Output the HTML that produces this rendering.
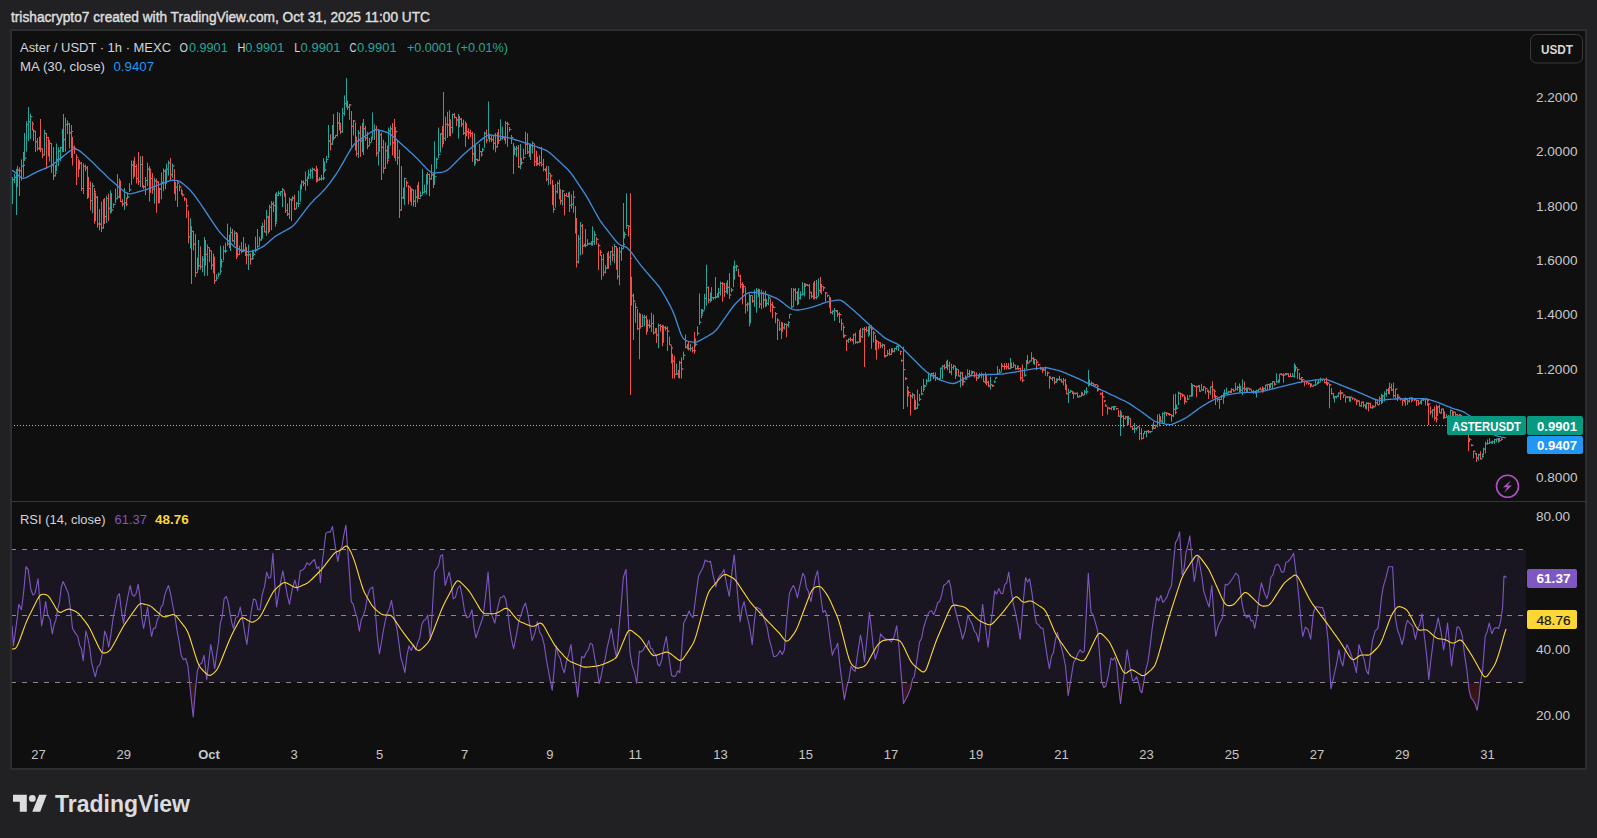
<!DOCTYPE html>
<html><head><meta charset="utf-8">
<style>
html,body{margin:0;padding:0;background:#212023;width:1597px;height:838px;overflow:hidden}
svg{display:block}
text{font-family:"Liberation Sans", sans-serif}
</style></head><body>
<svg width="1597" height="838" viewBox="0 0 1597 838">
<defs>
<clipPath id="cp"><rect x="12" y="31" width="1514" height="470"/></clipPath>
<clipPath id="cr"><rect x="12" y="502" width="1514" height="240"/></clipPath>
<clipPath id="cov"><rect x="12" y="502" width="1514" height="47.5"/></clipPath>
<clipPath id="cun"><rect x="12" y="682.5" width="1514" height="60"/></clipPath>
<linearGradient id="gun" x1="0" y1="0" x2="0" y2="1"><stop offset="0" stop-color="#f23645" stop-opacity="0"/><stop offset="1" stop-color="#f23645" stop-opacity="0.2"/></linearGradient>
<linearGradient id="gov" x1="0" y1="0" x2="0" y2="1"><stop offset="0" stop-color="#089981" stop-opacity="0.18"/><stop offset="1" stop-color="#089981" stop-opacity="0"/></linearGradient>
</defs>
<rect x="0" y="0" width="1597" height="838" fill="#212023"/>
<text x="11" y="22.3" font-size="14" fill="#dcdcdc" stroke="#dcdcdc" stroke-width="0.45" textLength="419" lengthAdjust="spacingAndGlyphs">trishacrypto7 created with TradingView.com, Oct 31, 2025 11:00 UTC</text>
<rect x="11" y="30" width="1575" height="739" fill="#0f0f0f" stroke="#2e2e2e" stroke-width="2"/>
<!-- separator -->
<rect x="12" y="501" width="1573" height="1" fill="#363636"/>

<!-- price pane -->
<g clip-path="url(#cp)">
<path d="M14 425.5H1447" stroke="#9cc4b6" stroke-width="1" stroke-dasharray="1 2" fill="none"/>
<path d="M12.5 177.0V204.0M11.0 190.5h1.5M12.5 179.7h1.5M14.5 173.9V183.1M13.0 179.7h1.5M14.5 177.3h1.5M16.5 168.8V215.0M15.0 177.3h1.5M16.5 174.7h1.5M17.5 165.9V187.2M16.0 174.7h1.5M17.5 170.2h1.5M21.5 159.4V180.6M20.0 170.8h1.5M21.5 166.2h1.5M23.5 152.0V177.0M22.0 166.2h1.5M23.5 165.2h1.5M24.5 133.0V161.0M23.0 165.2h1.5M24.5 158.2h1.5M26.5 121.1V151.5M25.0 158.2h1.5M26.5 124.4h1.5M28.5 107.0V141.0M27.0 124.4h1.5M28.5 121.8h1.5M30.5 113.7V139.1M29.0 121.8h1.5M30.5 116.7h1.5M39.5 136.6V150.1M38.0 148.4h1.5M39.5 144.7h1.5M44.5 129.8V155.3M43.0 155.0h1.5M44.5 133.3h1.5M49.5 140.0V161.4M48.0 145.8h1.5M49.5 143.4h1.5M55.5 165.0V176.5M54.0 175.8h1.5M55.5 173.1h1.5M56.5 143.5V171.3M55.0 173.1h1.5M56.5 159.5h1.5M58.5 147.3V166.1M57.0 159.5h1.5M58.5 151.1h1.5M60.5 146.8V161.0M59.0 151.1h1.5M60.5 147.7h1.5M62.5 128.9V152.1M61.0 147.7h1.5M62.5 137.1h1.5M65.5 117.6V151.8M64.0 139.7h1.5M65.5 124.7h1.5M67.5 120.4V134.2M66.0 124.7h1.5M67.5 123.9h1.5M71.5 125.0V158.0M70.0 132.8h1.5M71.5 131.5h1.5M83.5 163.2V194.1M82.0 188.5h1.5M83.5 166.3h1.5M92.5 182.8V213.3M91.0 200.6h1.5M92.5 186.1h1.5M103.5 199.2V228.7M102.0 228.0h1.5M103.5 202.2h1.5M106.5 195.7V223.0M105.0 216.6h1.5M106.5 198.5h1.5M110.5 190.3V213.8M109.0 208.2h1.5M110.5 198.6h1.5M113.5 203.3V207.9M112.0 210.0h1.5M113.5 204.4h1.5M115.5 188.6V203.2M114.0 204.4h1.5M115.5 198.6h1.5M117.5 174.0V199.3M116.0 198.6h1.5M117.5 196.8h1.5M119.5 178.5V198.2M118.0 196.8h1.5M119.5 183.5h1.5M124.5 188.0V210.0M123.0 204.1h1.5M124.5 202.9h1.5M127.5 192.4V199.2M126.0 204.2h1.5M127.5 197.0h1.5M129.5 183.2V192.0M128.0 197.0h1.5M129.5 189.8h1.5M131.5 160.5V184.8M130.0 189.8h1.5M131.5 165.0h1.5M133.5 160.6V178.7M132.0 165.0h1.5M133.5 164.2h1.5M140.5 156.2V187.0M139.0 181.6h1.5M140.5 164.5h1.5M145.5 177.0V195.1M144.0 186.8h1.5M145.5 180.5h1.5M147.5 162.7V186.1M146.0 180.5h1.5M147.5 169.2h1.5M154.5 177.7V203.7M153.0 189.1h1.5M154.5 181.0h1.5M159.5 187.8V203.1M158.0 202.2h1.5M159.5 189.0h1.5M161.5 172.5V199.3M160.0 189.0h1.5M161.5 182.3h1.5M163.5 168.4V191.2M162.0 182.3h1.5M163.5 171.1h1.5M166.5 163.6V183.8M165.0 177.9h1.5M166.5 169.1h1.5M168.5 160.6V175.6M167.0 169.1h1.5M168.5 163.0h1.5M172.5 163.6V177.9M171.0 174.8h1.5M172.5 165.9h1.5M175.5 181.9V200.7M174.0 189.4h1.5M175.5 187.2h1.5M177.5 180.0V207.0M176.0 187.2h1.5M177.5 183.1h1.5M190.5 218.4V248.5M189.0 237.1h1.5M190.5 231.1h1.5M197.5 257.5V272.8M196.0 272.7h1.5M197.5 269.1h1.5M198.5 240.0V268.5M197.0 269.1h1.5M198.5 265.6h1.5M202.5 256.0V272.3M201.0 266.6h1.5M202.5 259.8h1.5M204.5 237.0V276.0M203.0 259.8h1.5M204.5 241.1h1.5M207.5 244.5V275.8M206.0 254.4h1.5M207.5 247.6h1.5M216.5 274.2V280.8M215.0 280.7h1.5M216.5 278.1h1.5M218.5 272.5V277.3M217.0 278.1h1.5M218.5 274.3h1.5M220.5 245.6V273.8M219.0 274.3h1.5M220.5 271.1h1.5M221.5 259.0V267.6M220.0 271.1h1.5M221.5 261.6h1.5M223.5 245.5V260.4M222.0 261.6h1.5M223.5 251.1h1.5M225.5 242.7V253.3M224.0 251.1h1.5M225.5 250.9h1.5M227.5 223.6V246.1M226.0 250.9h1.5M227.5 243.9h1.5M230.5 227.1V251.1M229.0 246.0h1.5M230.5 232.6h1.5M234.5 230.7V244.9M233.0 240.9h1.5M234.5 233.3h1.5M239.5 245.6V255.1M238.0 254.5h1.5M239.5 250.4h1.5M243.5 237.0V251.6M242.0 251.6h1.5M243.5 250.1h1.5M245.5 243.4V256.2M244.0 250.1h1.5M245.5 248.0h1.5M248.5 244.6V270.0M247.0 254.9h1.5M248.5 254.7h1.5M252.5 249.8V259.9M251.0 259.1h1.5M252.5 258.3h1.5M253.5 251.2V256.5M252.0 258.3h1.5M253.5 254.4h1.5M255.5 236.6V252.4M254.0 254.4h1.5M255.5 250.4h1.5M257.5 229.0V248.3M256.0 250.4h1.5M257.5 246.4h1.5M259.5 236.8V245.7M258.0 246.4h1.5M259.5 239.9h1.5M261.5 226.0V240.7M260.0 239.9h1.5M261.5 226.7h1.5M262.5 222.7V238.8M261.0 226.7h1.5M262.5 226.5h1.5M266.5 210.0V235.8M265.0 231.9h1.5M266.5 217.2h1.5M269.5 204.6V231.9M268.0 231.1h1.5M269.5 207.3h1.5M271.5 201.0V230.2M270.0 207.3h1.5M271.5 204.0h1.5M276.5 192.2V222.0M275.0 223.3h1.5M276.5 195.2h1.5M278.5 190.8V196.0M277.0 195.2h1.5M278.5 193.4h1.5M280.5 191.2V196.0M279.0 193.4h1.5M280.5 191.7h1.5M282.5 188.0V207.0M281.0 191.7h1.5M282.5 189.9h1.5M289.5 197.5V219.1M288.0 214.0h1.5M289.5 199.7h1.5M292.5 196.1V200.6M291.0 200.3h1.5M292.5 198.1h1.5M296.5 202.0V208.8M295.0 209.0h1.5M296.5 203.6h1.5M298.5 190.7V207.0M297.0 203.6h1.5M298.5 203.6h1.5M300.5 184.5V201.7M299.0 203.6h1.5M300.5 186.2h1.5M301.5 180.3V189.5M300.0 186.2h1.5M301.5 182.1h1.5M305.5 171.5V190.7M304.0 183.3h1.5M305.5 180.4h1.5M307.5 176.5V185.9M306.0 180.4h1.5M307.5 177.8h1.5M308.5 169.6V179.0M307.0 177.8h1.5M308.5 174.8h1.5M310.5 168.6V178.7M309.0 174.8h1.5M310.5 170.8h1.5M312.5 167.6V178.8M311.0 170.8h1.5M312.5 169.3h1.5M319.5 177.1V180.7M318.0 179.9h1.5M319.5 179.2h1.5M321.5 174.9V180.6M320.0 179.2h1.5M321.5 178.6h1.5M323.5 158.0V180.1M322.0 178.6h1.5M323.5 177.9h1.5M324.5 161.4V172.5M323.0 177.9h1.5M324.5 169.9h1.5M326.5 155.9V163.0M325.0 169.9h1.5M326.5 159.5h1.5M328.5 125.0V158.0M327.0 159.5h1.5M328.5 141.0h1.5M332.5 124.9V144.9M331.0 144.1h1.5M332.5 132.9h1.5M335.5 135.1V137.8M334.0 137.8h1.5M335.5 135.4h1.5M337.5 111.9V136.6M336.0 135.4h1.5M337.5 122.9h1.5M342.5 108.0V133.0M341.0 131.7h1.5M342.5 113.5h1.5M344.5 95.4V115.7M343.0 113.5h1.5M344.5 103.7h1.5M346.5 78.0V107.4M345.0 103.7h1.5M346.5 103.6h1.5M349.5 104.0V119.9M348.0 107.2h1.5M349.5 105.0h1.5M353.5 120.0V135.5M352.0 126.3h1.5M353.5 120.9h1.5M358.5 130.0V158.0M357.0 153.6h1.5M358.5 133.1h1.5M362.5 122.9V152.2M361.0 141.0h1.5M362.5 126.2h1.5M369.5 137.9V145.7M368.0 146.0h1.5M369.5 142.6h1.5M371.5 136.6V142.1M370.0 142.6h1.5M371.5 139.3h1.5M372.5 112.5V138.7M371.0 139.3h1.5M372.5 130.6h1.5M374.5 124.4V139.9M373.0 130.6h1.5M374.5 129.4h1.5M378.5 129.4V165.6M377.0 153.1h1.5M378.5 144.4h1.5M379.5 130.3V151.8M378.0 144.4h1.5M379.5 134.7h1.5M385.5 142.3V168.7M384.0 168.2h1.5M385.5 150.7h1.5M388.5 127.6V159.3M387.0 160.5h1.5M388.5 131.1h1.5M390.5 125.6V145.7M389.0 131.1h1.5M390.5 128.8h1.5M395.5 127.0V161.1M394.0 144.8h1.5M395.5 131.7h1.5M401.5 166.0V210.6M400.0 210.1h1.5M401.5 197.7h1.5M403.5 187.6V199.0M402.0 197.7h1.5M403.5 195.6h1.5M404.5 177.7V205.1M403.0 195.6h1.5M404.5 178.6h1.5M411.5 188.1V205.5M410.0 197.9h1.5M411.5 189.9h1.5M415.5 189.6V207.0M414.0 201.2h1.5M415.5 197.1h1.5M417.5 184.9V202.6M416.0 197.1h1.5M417.5 187.7h1.5M420.5 191.5V197.6M419.0 198.5h1.5M420.5 195.4h1.5M422.5 168.8V194.8M421.0 195.4h1.5M422.5 192.4h1.5M424.5 184.5V193.1M423.0 192.4h1.5M424.5 191.5h1.5M426.5 174.2V194.5M425.0 191.5h1.5M426.5 181.5h1.5M427.5 172.2V184.7M426.0 181.5h1.5M427.5 174.5h1.5M431.5 164.4V179.7M430.0 178.8h1.5M431.5 174.9h1.5M434.5 141.3V185.0M433.0 184.3h1.5M434.5 176.5h1.5M436.5 157.6V168.9M435.0 176.5h1.5M436.5 159.1h1.5M438.5 127.6V157.8M437.0 159.1h1.5M438.5 154.5h1.5M440.5 133.3V152.5M439.0 154.5h1.5M440.5 133.9h1.5M443.5 92.0V144.0M442.0 142.9h1.5M443.5 138.3h1.5M445.5 116.7V141.0M444.0 138.3h1.5M445.5 124.4h1.5M449.5 110.2V136.0M448.0 124.9h1.5M449.5 120.3h1.5M452.5 113.6V133.4M451.0 127.5h1.5M452.5 114.7h1.5M458.5 114.0V138.6M457.0 120.0h1.5M458.5 116.9h1.5M465.5 121.3V146.8M464.0 133.1h1.5M465.5 123.8h1.5M474.5 133.0V166.0M473.0 153.9h1.5M474.5 149.6h1.5M479.5 144.0V160.8M478.0 160.3h1.5M479.5 151.6h1.5M482.5 148.1V152.3M481.0 154.7h1.5M482.5 149.8h1.5M484.5 131.6V147.8M483.0 149.8h1.5M484.5 133.3h1.5M488.5 101.5V138.9M487.0 140.1h1.5M488.5 135.2h1.5M497.5 132.7V147.5M496.0 146.9h1.5M497.5 133.2h1.5M500.5 119.4V140.4M499.0 140.5h1.5M500.5 138.4h1.5M502.5 126.6V139.7M501.0 138.4h1.5M502.5 137.7h1.5M505.5 121.1V143.9M504.0 139.6h1.5M505.5 123.4h1.5M514.5 146.4V155.0M513.0 149.2h1.5M514.5 149.1h1.5M516.5 145.7V156.9M515.0 149.1h1.5M516.5 148.3h1.5M520.5 144.0V169.2M519.0 166.9h1.5M520.5 158.7h1.5M523.5 148.7V159.8M522.0 162.7h1.5M523.5 157.5h1.5M525.5 131.7V154.5M524.0 157.5h1.5M525.5 144.5h1.5M530.5 143.6V160.0M529.0 154.9h1.5M530.5 145.4h1.5M532.5 141.3V153.5M531.0 145.4h1.5M532.5 143.4h1.5M539.5 155.3V166.0M538.0 163.9h1.5M539.5 162.7h1.5M545.5 168.3V171.5M544.0 169.5h1.5M545.5 169.2h1.5M548.5 166.0V185.0M547.0 179.4h1.5M548.5 173.3h1.5M555.5 183.8V207.6M554.0 209.3h1.5M555.5 191.7h1.5M557.5 181.3V193.6M556.0 191.7h1.5M557.5 183.5h1.5M562.5 189.9V205.5M561.0 200.9h1.5M562.5 191.0h1.5M568.5 192.4V197.7M567.0 196.3h1.5M568.5 194.5h1.5M571.5 194.6V208.7M570.0 205.4h1.5M571.5 204.3h1.5M573.5 190.7V212.7M572.0 204.3h1.5M573.5 197.2h1.5M578.5 235.1V263.6M577.0 261.9h1.5M578.5 238.9h1.5M580.5 222.0V255.2M579.0 238.9h1.5M580.5 225.8h1.5M584.5 244.2V246.4M583.0 246.1h1.5M584.5 244.3h1.5M587.5 239.2V245.6M586.0 245.4h1.5M587.5 243.9h1.5M589.5 242.6V244.6M588.0 243.9h1.5M589.5 243.8h1.5M591.5 241.0V245.6M590.0 243.8h1.5M591.5 243.8h1.5M592.5 226.4V245.6M591.0 243.8h1.5M592.5 241.7h1.5M594.5 230.9V244.9M593.0 241.7h1.5M594.5 235.0h1.5M605.5 265.2V273.4M604.0 272.2h1.5M605.5 268.3h1.5M607.5 252.7V269.1M606.0 268.3h1.5M607.5 254.5h1.5M610.5 250.9V265.1M609.0 257.3h1.5M610.5 251.6h1.5M614.5 244.0V263.3M613.0 255.0h1.5M614.5 246.6h1.5M619.5 247.0V285.2M618.0 276.4h1.5M619.5 251.9h1.5M621.5 246.8V260.8M620.0 251.9h1.5M621.5 248.8h1.5M623.5 203.0V248.7M622.0 248.8h1.5M623.5 244.3h1.5M624.5 231.8V238.4M623.0 244.3h1.5M624.5 234.5h1.5M626.5 193.3V228.9M625.0 234.5h1.5M626.5 225.5h1.5M639.5 312.7V359.3M638.0 328.5h1.5M639.5 317.5h1.5M642.5 314.4V327.0M641.0 326.5h1.5M642.5 317.3h1.5M644.5 315.0V326.3M643.0 317.3h1.5M644.5 317.3h1.5M651.5 312.7V332.1M650.0 325.9h1.5M651.5 323.5h1.5M655.5 328.1V333.4M654.0 332.7h1.5M655.5 331.8h1.5M658.5 323.6V348.3M657.0 334.9h1.5M658.5 325.5h1.5M663.5 325.3V342.7M662.0 339.8h1.5M663.5 327.7h1.5M676.5 363.6V375.0M675.0 374.4h1.5M676.5 373.9h1.5M679.5 360.9V378.5M678.0 376.6h1.5M679.5 362.7h1.5M683.5 351.6V360.0M682.0 369.0h1.5M683.5 355.3h1.5M685.5 334.6V348.4M684.0 355.3h1.5M685.5 347.0h1.5M690.5 343.7V351.4M689.0 348.8h1.5M690.5 348.6h1.5M695.5 338.4V346.6M694.0 350.8h1.5M695.5 344.3h1.5M697.5 326.3V335.8M696.0 344.3h1.5M697.5 333.3h1.5M699.5 293.5V325.0M698.0 333.3h1.5M699.5 322.3h1.5M701.5 309.1V318.3M700.0 322.3h1.5M701.5 315.3h1.5M702.5 309.1V314.0M701.0 315.3h1.5M702.5 310.8h1.5M704.5 293.8V309.8M703.0 310.8h1.5M704.5 298.5h1.5M706.5 264.7V305.5M705.0 298.5h1.5M706.5 287.7h1.5M710.5 292.6V302.4M709.0 299.9h1.5M710.5 299.1h1.5M711.5 287.1V301.2M710.0 299.1h1.5M711.5 297.6h1.5M713.5 297.3V299.8M712.0 297.6h1.5M713.5 297.5h1.5M715.5 277.0V299.1M714.0 297.5h1.5M715.5 296.9h1.5M717.5 293.1V297.8M716.0 296.9h1.5M717.5 296.4h1.5M718.5 287.8V297.8M717.0 296.4h1.5M718.5 292.4h1.5M720.5 281.5V295.6M719.0 292.4h1.5M720.5 283.4h1.5M726.5 282.6V293.1M725.0 291.6h1.5M726.5 286.4h1.5M731.5 287.8V292.3M730.0 294.9h1.5M731.5 290.0h1.5M733.5 265.9V287.2M732.0 290.0h1.5M733.5 272.6h1.5M734.5 260.5V279.7M733.0 272.6h1.5M734.5 267.2h1.5M736.5 265.0V271.1M735.0 267.2h1.5M736.5 266.3h1.5M743.5 284.3V293.1M742.0 287.6h1.5M743.5 286.6h1.5M747.5 302.1V311.5M746.0 305.0h1.5M747.5 304.0h1.5M750.5 295.2V323.3M749.0 315.2h1.5M750.5 295.5h1.5M754.5 289.6V306.8M753.0 301.0h1.5M754.5 292.3h1.5M756.5 288.0V312.7M755.0 292.3h1.5M756.5 290.9h1.5M758.5 288.5V296.8M757.0 290.9h1.5M758.5 290.8h1.5M761.5 289.7V309.2M760.0 304.1h1.5M761.5 293.3h1.5M766.5 299.1V305.9M765.0 305.7h1.5M766.5 303.4h1.5M768.5 296.1V305.3M767.0 303.4h1.5M768.5 297.8h1.5M781.5 321.8V339.1M780.0 329.2h1.5M781.5 323.5h1.5M784.5 323.0V329.5M783.0 327.8h1.5M784.5 324.5h1.5M788.5 321.2V327.5M787.0 324.9h1.5M788.5 322.5h1.5M789.5 314.1V318.7M788.0 322.5h1.5M789.5 314.4h1.5M791.5 288.0V308.7M790.0 314.4h1.5M791.5 306.8h1.5M793.5 288.0V306.6M792.0 306.8h1.5M793.5 289.9h1.5M798.5 288.0V304.4M797.0 300.0h1.5M798.5 298.2h1.5M800.5 291.2V299.5M799.0 298.2h1.5M800.5 295.0h1.5M802.5 282.2V295.3M801.0 295.0h1.5M802.5 294.0h1.5M804.5 282.9V296.5M803.0 294.0h1.5M804.5 284.3h1.5M813.5 282.5V299.4M812.0 296.3h1.5M813.5 286.1h1.5M816.5 280.0V299.4M815.0 297.5h1.5M816.5 296.8h1.5M818.5 278.4V296.1M817.0 296.8h1.5M818.5 290.6h1.5M821.5 284.0V294.3M820.0 291.8h1.5M821.5 286.5h1.5M832.5 310.4V314.5M831.0 312.4h1.5M832.5 311.2h1.5M834.5 308.0V320.9M833.0 311.2h1.5M834.5 310.6h1.5M836.5 310.2V312.2M835.0 310.6h1.5M836.5 310.6h1.5M848.5 338.2V342.9M847.0 340.8h1.5M848.5 339.3h1.5M853.5 333.7V344.5M852.0 340.4h1.5M853.5 334.8h1.5M857.5 341.7V343.7M856.0 342.3h1.5M857.5 342.0h1.5M859.5 330.2V342.7M858.0 342.0h1.5M859.5 330.6h1.5M862.5 327.7V338.1M861.0 336.6h1.5M862.5 329.3h1.5M868.5 326.1V336.7M867.0 330.4h1.5M868.5 328.2h1.5M869.5 325.5V335.4M868.0 328.2h1.5M869.5 327.8h1.5M882.5 343.5V348.3M881.0 345.7h1.5M882.5 344.9h1.5M885.5 355.4V357.4M884.0 356.1h1.5M885.5 355.7h1.5M887.5 350.1V356.2M886.0 355.7h1.5M887.5 353.7h1.5M891.5 348.3V354.8M890.0 354.4h1.5M891.5 349.0h1.5M894.5 347.7V352.4M893.0 351.3h1.5M894.5 348.5h1.5M896.5 345.7V350.2M895.0 348.5h1.5M896.5 346.3h1.5M898.5 344.5V351.0M897.0 346.3h1.5M898.5 345.4h1.5M912.5 392.7V398.5M911.0 396.1h1.5M912.5 394.8h1.5M915.5 399.8V410.0M914.0 408.6h1.5M915.5 408.1h1.5M917.5 389.6V409.0M916.0 408.1h1.5M917.5 404.8h1.5M919.5 394.0V401.0M918.0 404.8h1.5M919.5 399.3h1.5M921.5 386.1V395.3M920.0 399.3h1.5M921.5 393.9h1.5M923.5 378.9V391.8M922.0 393.9h1.5M923.5 389.4h1.5M924.5 384.8V387.7M923.0 389.4h1.5M924.5 385.9h1.5M926.5 378.8V384.8M925.0 385.9h1.5M926.5 381.0h1.5M928.5 372.4V381.5M927.0 381.0h1.5M928.5 380.9h1.5M930.5 373.9V381.0M929.0 380.9h1.5M930.5 374.3h1.5M931.5 372.8V376.6M930.0 374.3h1.5M931.5 373.7h1.5M939.5 378.5V380.5M938.0 379.4h1.5M939.5 378.7h1.5M940.5 367.8V379.2M939.0 378.7h1.5M940.5 368.2h1.5M942.5 365.1V378.9M941.0 368.2h1.5M942.5 366.3h1.5M946.5 360.8V368.3M945.0 367.6h1.5M946.5 362.0h1.5M951.5 363.7V375.2M950.0 372.0h1.5M951.5 367.6h1.5M953.5 364.8V369.7M952.0 367.6h1.5M953.5 366.0h1.5M956.5 368.1V376.2M955.0 372.4h1.5M956.5 369.5h1.5M960.5 371.6V387.5M959.0 376.0h1.5M960.5 373.1h1.5M963.5 377.4V382.8M962.0 384.0h1.5M963.5 381.7h1.5M965.5 375.3V379.9M964.0 381.7h1.5M965.5 378.9h1.5M967.5 369.2V376.9M966.0 378.9h1.5M967.5 373.8h1.5M971.5 370.5V376.2M970.0 375.3h1.5M971.5 373.4h1.5M972.5 371.1V374.1M971.0 373.4h1.5M972.5 371.9h1.5M978.5 375.2V378.8M977.0 377.9h1.5M978.5 375.6h1.5M979.5 373.0V377.7M978.0 375.6h1.5M979.5 374.8h1.5M981.5 372.4V378.4M980.0 374.8h1.5M981.5 374.4h1.5M985.5 372.4V383.7M984.0 381.8h1.5M985.5 376.6h1.5M990.5 376.7V389.6M989.0 386.0h1.5M990.5 384.7h1.5M994.5 380.5V382.9M993.0 385.8h1.5M994.5 381.8h1.5M995.5 377.6V379.6M994.0 381.8h1.5M995.5 377.7h1.5M997.5 366.0V374.6M996.0 377.7h1.5M997.5 373.7h1.5M999.5 369.0V373.1M998.0 373.7h1.5M999.5 372.3h1.5M1001.5 362.9V371.7M1000.0 372.3h1.5M1001.5 365.9h1.5M1010.5 357.9V369.4M1009.0 368.4h1.5M1010.5 365.0h1.5M1013.5 362.2V367.5M1012.0 367.5h1.5M1013.5 365.2h1.5M1017.5 365.4V369.5M1016.0 368.8h1.5M1017.5 366.3h1.5M1024.5 368.2V376.7M1023.0 380.3h1.5M1024.5 375.2h1.5M1026.5 360.0V369.3M1025.0 375.2h1.5M1026.5 362.4h1.5M1029.5 360.7V362.7M1028.0 362.9h1.5M1029.5 361.1h1.5M1031.5 352.2V361.2M1030.0 361.1h1.5M1031.5 358.5h1.5M1034.5 358.6V364.9M1033.0 361.3h1.5M1034.5 359.6h1.5M1045.5 366.5V375.8M1044.0 369.9h1.5M1045.5 367.5h1.5M1052.5 376.8V381.0M1051.0 378.6h1.5M1052.5 377.7h1.5M1056.5 378.4V383.0M1055.0 382.2h1.5M1056.5 379.2h1.5M1057.5 379.2V381.2M1056.0 379.2h1.5M1057.5 379.2h1.5M1063.5 378.0V385.4M1062.0 381.9h1.5M1063.5 380.5h1.5M1068.5 388.7V403.0M1067.0 393.7h1.5M1068.5 392.4h1.5M1070.5 390.0V392.8M1069.0 392.4h1.5M1070.5 391.2h1.5M1075.5 392.7V394.7M1074.0 393.3h1.5M1075.5 393.3h1.5M1079.5 395.2V397.2M1078.0 397.0h1.5M1079.5 396.3h1.5M1081.5 391.6V396.3M1080.0 396.3h1.5M1081.5 394.6h1.5M1084.5 390.0V394.9M1083.0 395.0h1.5M1084.5 392.0h1.5M1086.5 387.3V394.4M1085.0 392.0h1.5M1086.5 391.9h1.5M1088.5 370.0V386.6M1087.0 391.9h1.5M1088.5 385.4h1.5M1089.5 379.4V385.0M1088.0 385.4h1.5M1089.5 383.9h1.5M1091.5 381.5V385.8M1090.0 383.9h1.5M1091.5 383.3h1.5M1095.5 384.2V386.2M1094.0 384.9h1.5M1095.5 384.7h1.5M1111.5 406.7V410.3M1110.0 408.5h1.5M1111.5 407.1h1.5M1113.5 406.2V410.3M1112.0 407.1h1.5M1113.5 406.7h1.5M1114.5 405.9V410.2M1113.0 406.7h1.5M1114.5 406.6h1.5M1120.5 410.2V436.0M1119.0 416.1h1.5M1120.5 412.3h1.5M1125.5 415.9V419.5M1124.0 418.5h1.5M1125.5 417.0h1.5M1128.5 415.9V424.8M1127.0 424.1h1.5M1128.5 418.4h1.5M1134.5 423.0V433.0M1133.0 429.0h1.5M1134.5 428.6h1.5M1136.5 427.9V430.3M1135.0 428.6h1.5M1136.5 427.9h1.5M1137.5 426.4V428.5M1136.0 427.9h1.5M1137.5 426.7h1.5M1143.5 433.2V438.8M1142.0 438.5h1.5M1143.5 433.5h1.5M1144.5 430.8V433.8M1143.0 433.5h1.5M1144.5 431.5h1.5M1146.5 430.7V437.4M1145.0 431.5h1.5M1146.5 431.3h1.5M1150.5 431.0V433.0M1149.0 431.8h1.5M1150.5 431.5h1.5M1152.5 424.5V430.2M1151.0 431.5h1.5M1152.5 426.3h1.5M1155.5 424.7V428.3M1154.0 428.4h1.5M1155.5 425.7h1.5M1157.5 414.5V427.4M1156.0 425.7h1.5M1157.5 422.6h1.5M1159.5 413.8V426.4M1158.0 422.6h1.5M1159.5 417.2h1.5M1162.5 412.4V424.0M1161.0 421.2h1.5M1162.5 413.6h1.5M1164.5 411.6V423.0M1163.0 413.6h1.5M1164.5 412.8h1.5M1173.5 394.4V417.3M1172.0 415.7h1.5M1173.5 409.3h1.5M1176.5 404.5V409.8M1175.0 412.3h1.5M1176.5 408.1h1.5M1178.5 391.6V405.2M1177.0 408.1h1.5M1178.5 393.1h1.5M1187.5 394.8V400.2M1186.0 401.9h1.5M1187.5 399.1h1.5M1189.5 395.5V397.5M1188.0 399.1h1.5M1189.5 395.8h1.5M1191.5 383.0V396.8M1190.0 395.8h1.5M1191.5 394.8h1.5M1192.5 384.2V396.5M1191.0 394.8h1.5M1192.5 385.5h1.5M1198.5 385.0V387.3M1197.0 386.7h1.5M1198.5 385.9h1.5M1201.5 383.8V390.5M1200.0 391.1h1.5M1201.5 389.9h1.5M1203.5 386.1V391.1M1202.0 389.9h1.5M1203.5 386.9h1.5M1210.5 386.5V394.9M1209.0 391.9h1.5M1210.5 386.8h1.5M1221.5 395.1V399.9M1220.0 399.5h1.5M1221.5 396.1h1.5M1223.5 392.6V403.9M1222.0 396.1h1.5M1223.5 395.0h1.5M1224.5 389.5V397.8M1223.0 395.0h1.5M1224.5 393.4h1.5M1226.5 387.6V394.5M1225.0 393.4h1.5M1226.5 393.2h1.5M1228.5 390.9V393.4M1227.0 393.2h1.5M1228.5 391.9h1.5M1231.5 388.1V392.6M1230.0 392.5h1.5M1231.5 389.5h1.5M1235.5 382.6V390.4M1234.0 390.8h1.5M1235.5 389.2h1.5M1237.5 385.9V390.7M1236.0 389.2h1.5M1237.5 387.4h1.5M1240.5 385.7V392.4M1239.0 390.9h1.5M1240.5 390.3h1.5M1242.5 379.4V395.1M1241.0 390.3h1.5M1242.5 388.4h1.5M1246.5 387.5V392.2M1245.0 389.2h1.5M1246.5 389.2h1.5M1247.5 387.6V392.6M1246.0 389.2h1.5M1247.5 388.3h1.5M1256.5 389.7V397.6M1255.0 393.1h1.5M1256.5 390.7h1.5M1258.5 389.1V392.0M1257.0 390.7h1.5M1258.5 389.1h1.5M1263.5 387.5V391.6M1262.0 391.7h1.5M1263.5 388.7h1.5M1265.5 384.6V390.4M1264.0 388.7h1.5M1265.5 385.2h1.5M1267.5 383.8V390.0M1266.0 385.2h1.5M1267.5 384.5h1.5M1270.5 383.0V388.0M1269.0 387.1h1.5M1270.5 383.9h1.5M1272.5 381.3V388.8M1271.0 383.9h1.5M1272.5 381.7h1.5M1276.5 373.2V382.8M1275.0 384.2h1.5M1276.5 381.8h1.5M1278.5 379.6V382.6M1277.0 381.8h1.5M1278.5 381.7h1.5M1279.5 374.0V382.6M1278.0 381.7h1.5M1279.5 374.1h1.5M1285.5 373.2V375.2M1284.0 375.0h1.5M1285.5 373.9h1.5M1286.5 373.2V375.2M1285.0 373.9h1.5M1286.5 373.8h1.5M1292.5 373.2V376.6M1291.0 376.5h1.5M1292.5 376.3h1.5M1294.5 363.2V377.6M1293.0 376.3h1.5M1294.5 365.5h1.5M1301.5 377.0V382.6M1300.0 378.9h1.5M1301.5 377.5h1.5M1313.5 384.5V386.5M1312.0 386.3h1.5M1313.5 385.3h1.5M1315.5 379.4V386.1M1314.0 385.3h1.5M1315.5 384.4h1.5M1317.5 381.6V383.9M1316.0 384.4h1.5M1317.5 383.4h1.5M1318.5 379.7V382.8M1317.0 383.4h1.5M1318.5 382.4h1.5M1320.5 377.6V381.8M1319.0 382.4h1.5M1320.5 379.6h1.5M1322.5 379.1V381.1M1321.0 379.6h1.5M1322.5 379.4h1.5M1327.5 381.9V386.0M1326.0 383.1h1.5M1327.5 383.1h1.5M1334.5 396.0V402.6M1333.0 397.7h1.5M1334.5 396.8h1.5M1336.5 396.2V398.5M1335.0 396.8h1.5M1336.5 396.2h1.5M1338.5 392.4V397.0M1337.0 396.2h1.5M1338.5 393.2h1.5M1341.5 392.2V394.2M1340.0 393.8h1.5M1341.5 393.0h1.5M1347.5 396.4V398.4M1346.0 397.0h1.5M1347.5 397.0h1.5M1350.5 396.4V401.7M1349.0 399.5h1.5M1350.5 397.2h1.5M1361.5 401.7V407.1M1360.0 405.8h1.5M1361.5 402.2h1.5M1366.5 402.2V409.6M1365.0 407.8h1.5M1366.5 403.3h1.5M1372.5 405.2V408.9M1371.0 407.7h1.5M1372.5 406.4h1.5M1375.5 400.0V406.4M1374.0 406.8h1.5M1375.5 402.8h1.5M1379.5 396.2V404.8M1378.0 404.8h1.5M1379.5 398.5h1.5M1382.5 394.6V403.1M1381.0 401.6h1.5M1382.5 396.2h1.5M1384.5 391.3V401.4M1383.0 396.2h1.5M1384.5 393.9h1.5M1386.5 388.9V396.5M1385.0 393.9h1.5M1386.5 390.2h1.5M1389.5 382.6V394.5M1388.0 391.7h1.5M1389.5 387.3h1.5M1395.5 388.9V398.6M1394.0 395.7h1.5M1395.5 389.1h1.5M1405.5 397.4V405.8M1404.0 401.1h1.5M1405.5 399.5h1.5M1409.5 397.4V402.7M1408.0 401.1h1.5M1409.5 398.1h1.5M1411.5 397.4V402.2M1410.0 398.1h1.5M1411.5 398.0h1.5M1420.5 400.5V403.3M1419.0 403.3h1.5M1420.5 401.6h1.5M1421.5 399.2V404.6M1420.0 401.6h1.5M1421.5 399.8h1.5M1423.5 399.0V401.0M1422.0 399.8h1.5M1423.5 399.6h1.5M1425.5 398.7V405.5M1424.0 399.6h1.5M1425.5 399.4h1.5M1432.5 409.2V417.7M1431.0 411.7h1.5M1432.5 410.1h1.5M1437.5 406.2V416.1M1436.0 419.2h1.5M1437.5 406.9h1.5M1441.5 408.8V413.5M1440.0 412.9h1.5M1441.5 409.0h1.5M1446.5 414.1V417.8M1445.0 417.6h1.5M1446.5 416.9h1.5M1448.5 415.1V417.1M1447.0 416.9h1.5M1448.5 416.2h1.5M1450.5 409.4V416.5M1449.0 416.2h1.5M1450.5 410.4h1.5M1453.5 411.4V416.4M1452.0 413.5h1.5M1453.5 412.1h1.5M1459.5 414.0V417.7M1458.0 416.0h1.5M1459.5 414.6h1.5M1478.5 453.7V460.5M1477.0 458.1h1.5M1478.5 454.8h1.5M1482.5 453.6V457.6M1481.0 458.8h1.5M1482.5 456.7h1.5M1483.5 447.8V455.4M1482.0 456.7h1.5M1483.5 449.2h1.5M1485.5 441.6V453.5M1484.0 449.2h1.5M1485.5 443.7h1.5M1487.5 439.5V444.6M1486.0 443.7h1.5M1487.5 443.5h1.5M1489.5 438.0V443.8M1488.0 443.5h1.5M1489.5 442.4h1.5M1491.5 441.7V443.7M1490.0 442.4h1.5M1491.5 442.2h1.5M1492.5 440.7V443.8M1491.0 442.2h1.5M1492.5 441.6h1.5M1494.5 439.0V444.0M1493.0 441.6h1.5M1494.5 439.5h1.5M1496.5 438.6V442.3M1495.0 439.5h1.5M1496.5 439.0h1.5M1498.5 438.0V442.8M1497.0 439.0h1.5M1498.5 438.6h1.5M1501.5 438.1V440.5M1500.0 440.4h1.5M1501.5 439.3h1.5" stroke="#26a69a" stroke-width="1" fill="none"/>
<path d="M19.5 167.3V196.0M18.0 170.2h1.5M19.5 170.8h1.5M32.5 121.4V130.4M31.0 116.7h1.5M32.5 124.0h1.5M33.5 129.1V141.1M32.0 124.0h1.5M33.5 131.2h1.5M35.5 130.8V152.0M34.0 131.2h1.5M35.5 141.8h1.5M37.5 138.1V150.8M36.0 141.8h1.5M37.5 148.4h1.5M40.5 119.0V152.1M39.0 144.7h1.5M40.5 148.9h1.5M42.5 148.4V158.3M41.0 148.9h1.5M42.5 155.0h1.5M46.5 133.0V169.0M45.0 133.3h1.5M46.5 137.5h1.5M48.5 136.9V156.5M47.0 137.5h1.5M48.5 145.8h1.5M51.5 143.0V172.8M50.0 143.4h1.5M51.5 164.9h1.5M53.5 147.0V180.0M52.0 164.9h1.5M53.5 175.8h1.5M63.5 114.0V152.0M62.0 137.1h1.5M63.5 139.7h1.5M69.5 123.2V148.5M68.0 123.9h1.5M69.5 132.8h1.5M72.5 136.9V165.5M71.0 131.5h1.5M72.5 147.2h1.5M74.5 145.5V154.0M73.0 147.2h1.5M74.5 148.4h1.5M76.5 154.1V185.0M75.0 148.4h1.5M76.5 157.4h1.5M78.5 158.8V177.0M77.0 157.4h1.5M78.5 161.6h1.5M79.5 160.3V169.4M78.0 161.6h1.5M79.5 163.2h1.5M81.5 161.8V191.2M80.0 163.2h1.5M81.5 188.5h1.5M85.5 164.7V171.2M84.0 166.3h1.5M85.5 167.9h1.5M87.5 166.0V199.0M86.0 167.9h1.5M87.5 185.5h1.5M88.5 176.8V197.9M87.0 185.5h1.5M88.5 188.4h1.5M90.5 181.5V210.4M89.0 188.4h1.5M90.5 200.6h1.5M94.5 188.1V223.6M93.0 186.1h1.5M94.5 191.4h1.5M95.5 192.5V221.1M94.0 191.4h1.5M95.5 197.3h1.5M97.5 196.1V227.7M96.0 197.3h1.5M97.5 224.0h1.5M99.5 209.1V230.4M98.0 224.0h1.5M99.5 224.1h1.5M101.5 201.7V232.0M100.0 224.1h1.5M101.5 228.0h1.5M104.5 198.0V224.0M103.0 202.2h1.5M104.5 216.6h1.5M108.5 193.5V221.0M107.0 198.5h1.5M108.5 208.2h1.5M111.5 193.1V212.7M110.0 198.6h1.5M111.5 210.0h1.5M120.5 180.4V201.9M119.0 183.5h1.5M120.5 201.7h1.5M122.5 199.2V206.4M121.0 201.7h1.5M122.5 204.1h1.5M126.5 197.5V206.4M125.0 202.9h1.5M126.5 204.2h1.5M134.5 156.9V176.8M133.0 164.2h1.5M134.5 166.6h1.5M136.5 164.4V183.4M135.0 166.6h1.5M136.5 178.7h1.5M138.5 152.0V185.0M137.0 178.7h1.5M138.5 181.6h1.5M142.5 155.9V187.5M141.0 164.5h1.5M142.5 186.3h1.5M143.5 185.1V188.9M142.0 186.3h1.5M143.5 186.8h1.5M149.5 166.0V201.7M148.0 169.2h1.5M149.5 174.4h1.5M150.5 168.6V192.9M149.0 174.4h1.5M150.5 178.6h1.5M152.5 173.1V193.9M151.0 178.6h1.5M152.5 189.1h1.5M156.5 178.7V212.7M155.0 181.0h1.5M156.5 181.9h1.5M158.5 181.2V203.5M157.0 181.9h1.5M158.5 202.2h1.5M165.5 169.2V189.2M164.0 171.1h1.5M165.5 177.9h1.5M170.5 158.0V180.1M169.0 163.0h1.5M170.5 174.8h1.5M174.5 169.2V193.8M173.0 165.9h1.5M174.5 189.4h1.5M179.5 184.5V191.3M178.0 183.1h1.5M179.5 187.0h1.5M181.5 188.6V194.7M180.0 187.0h1.5M181.5 191.0h1.5M182.5 192.7V196.5M181.0 191.0h1.5M182.5 194.9h1.5M184.5 196.9V200.9M183.0 194.9h1.5M184.5 198.8h1.5M186.5 199.0V218.0M185.0 198.8h1.5M186.5 205.8h1.5M188.5 210.6V243.5M187.0 205.8h1.5M188.5 237.1h1.5M191.5 226.2V284.0M190.0 231.1h1.5M191.5 231.4h1.5M193.5 230.8V250.4M192.0 231.4h1.5M193.5 244.3h1.5M195.5 234.1V277.0M194.0 244.3h1.5M195.5 272.7h1.5M200.5 246.3V269.6M199.0 265.6h1.5M200.5 266.6h1.5M205.5 240.0V265.7M204.0 241.1h1.5M205.5 254.4h1.5M209.5 247.7V262.2M208.0 247.6h1.5M209.5 250.7h1.5M211.5 250.6V269.6M210.0 250.7h1.5M211.5 265.2h1.5M213.5 253.5V273.4M212.0 265.2h1.5M213.5 267.1h1.5M214.5 256.6V284.0M213.0 267.1h1.5M214.5 280.7h1.5M229.5 234.5V248.3M228.0 243.9h1.5M229.5 246.0h1.5M232.5 228.9V241.7M231.0 232.6h1.5M232.5 240.9h1.5M236.5 232.0V259.0M235.0 233.3h1.5M236.5 234.9h1.5M237.5 233.4V256.8M236.0 234.9h1.5M237.5 254.5h1.5M241.5 242.1V253.4M240.0 250.4h1.5M241.5 251.6h1.5M246.5 247.3V264.4M245.0 248.0h1.5M246.5 254.9h1.5M250.5 253.3V264.6M249.0 254.7h1.5M250.5 259.1h1.5M264.5 219.6V232.4M263.0 226.5h1.5M264.5 231.9h1.5M268.5 215.7V233.7M267.0 217.2h1.5M268.5 231.1h1.5M273.5 201.5V212.2M272.0 204.0h1.5M273.5 205.5h1.5M275.5 193.5V226.5M274.0 205.5h1.5M275.5 223.3h1.5M284.5 190.4V196.6M283.0 189.9h1.5M284.5 193.6h1.5M285.5 192.8V213.1M284.0 193.6h1.5M285.5 210.5h1.5M287.5 203.5V216.1M286.0 210.5h1.5M287.5 214.0h1.5M291.5 198.4V221.0M290.0 199.7h1.5M291.5 200.3h1.5M294.5 194.6V210.1M293.0 198.1h1.5M294.5 209.0h1.5M303.5 180.4V186.2M302.0 182.1h1.5M303.5 183.3h1.5M314.5 168.5V170.6M313.0 169.3h1.5M314.5 170.6h1.5M316.5 165.8V182.5M315.0 170.6h1.5M316.5 174.0h1.5M317.5 168.6V181.7M316.0 174.0h1.5M317.5 179.9h1.5M330.5 134.2V150.5M329.0 141.0h1.5M330.5 144.1h1.5M333.5 114.0V140.4M332.0 132.9h1.5M333.5 137.8h1.5M339.5 112.8V130.4M338.0 122.9h1.5M339.5 126.7h1.5M340.5 122.9V134.2M339.0 126.7h1.5M340.5 131.7h1.5M347.5 100.8V109.9M346.0 103.6h1.5M347.5 107.2h1.5M351.5 111.0V147.0M350.0 105.0h1.5M351.5 126.3h1.5M355.5 122.5V150.6M354.0 120.9h1.5M355.5 147.5h1.5M356.5 136.6V156.5M355.0 147.5h1.5M356.5 153.6h1.5M360.5 125.8V156.9M359.0 133.1h1.5M360.5 141.0h1.5M363.5 119.0V155.0M362.0 126.2h1.5M363.5 128.7h1.5M365.5 125.7V141.0M364.0 128.7h1.5M365.5 138.0h1.5M367.5 131.8V149.2M366.0 138.0h1.5M367.5 146.0h1.5M376.5 125.8V156.6M375.0 129.4h1.5M376.5 153.1h1.5M381.5 132.5V180.0M380.0 134.7h1.5M381.5 147.3h1.5M383.5 139.8V173.4M382.0 147.3h1.5M383.5 168.2h1.5M387.5 145.5V164.0M386.0 150.7h1.5M387.5 160.5h1.5M392.5 123.0V155.4M391.0 128.8h1.5M392.5 142.8h1.5M394.5 119.0V158.0M393.0 142.8h1.5M394.5 144.8h1.5M397.5 139.9V164.8M396.0 131.7h1.5M397.5 157.6h1.5M399.5 149.6V218.0M398.0 157.6h1.5M399.5 210.1h1.5M406.5 180.4V187.1M405.0 178.6h1.5M406.5 182.9h1.5M408.5 185.0V204.4M407.0 182.9h1.5M408.5 187.0h1.5M410.5 186.6V201.7M409.0 187.0h1.5M410.5 197.9h1.5M413.5 189.6V206.5M412.0 189.9h1.5M413.5 201.2h1.5M418.5 181.8V198.8M417.0 187.7h1.5M418.5 198.5h1.5M429.5 173.6V196.2M428.0 174.5h1.5M429.5 178.8h1.5M433.5 173.5V188.1M432.0 174.9h1.5M433.5 184.3h1.5M442.5 125.8V147.5M441.0 133.9h1.5M442.5 142.9h1.5M447.5 111.8V138.0M446.0 124.4h1.5M447.5 124.9h1.5M450.5 119.4V136.5M449.0 120.3h1.5M450.5 127.5h1.5M454.5 112.9V118.3M453.0 114.7h1.5M454.5 117.4h1.5M456.5 117.0V126.2M455.0 117.4h1.5M456.5 120.0h1.5M459.5 116.1V127.4M458.0 116.9h1.5M459.5 119.2h1.5M461.5 117.9V127.0M460.0 119.2h1.5M461.5 124.2h1.5M463.5 119.6V135.0M462.0 124.2h1.5M463.5 133.1h1.5M466.5 123.5V136.3M465.0 123.8h1.5M466.5 131.8h1.5M468.5 128.3V139.1M467.0 131.8h1.5M468.5 132.9h1.5M470.5 129.6V137.1M469.0 132.9h1.5M470.5 133.7h1.5M472.5 131.8V161.8M471.0 133.7h1.5M472.5 153.9h1.5M475.5 143.8V164.3M474.0 149.6h1.5M475.5 159.4h1.5M477.5 158.8V161.5M476.0 159.4h1.5M477.5 160.3h1.5M481.5 151.1V156.7M480.0 151.6h1.5M481.5 154.7h1.5M486.5 129.6V143.3M485.0 133.3h1.5M486.5 140.1h1.5M489.5 133.7V142.2M488.0 135.2h1.5M489.5 138.9h1.5M491.5 135.7V142.1M490.0 138.9h1.5M491.5 139.7h1.5M493.5 135.1V149.8M492.0 139.7h1.5M493.5 143.3h1.5M495.5 133.0V152.3M494.0 143.3h1.5M495.5 146.9h1.5M498.5 129.0V143.9M497.0 133.2h1.5M498.5 140.5h1.5M504.5 136.7V140.2M503.0 137.7h1.5M504.5 139.6h1.5M507.5 121.7V146.8M506.0 123.4h1.5M507.5 124.2h1.5M509.5 127.0V131.6M508.0 124.2h1.5M509.5 129.5h1.5M511.5 135.0V144.1M510.0 129.5h1.5M511.5 137.6h1.5M513.5 143.0V174.0M512.0 137.6h1.5M513.5 149.2h1.5M518.5 145.0V167.7M517.0 148.3h1.5M518.5 166.9h1.5M521.5 157.8V165.1M520.0 158.7h1.5M521.5 162.7h1.5M527.5 133.3V154.1M526.0 144.5h1.5M527.5 152.0h1.5M529.5 144.2V157.0M528.0 152.0h1.5M529.5 154.9h1.5M534.5 143.9V166.0M533.0 143.4h1.5M534.5 161.6h1.5M536.5 150.8V166.0M535.0 161.6h1.5M536.5 163.9h1.5M537.5 156.7V165.3M536.0 163.9h1.5M537.5 163.9h1.5M541.5 146.8V166.4M540.0 162.7h1.5M541.5 164.5h1.5M543.5 158.8V171.4M542.0 164.5h1.5M543.5 169.5h1.5M546.5 165.7V181.3M545.0 169.2h1.5M546.5 179.4h1.5M550.5 173.7V184.4M549.0 173.3h1.5M550.5 175.9h1.5M552.5 179.8V205.1M551.0 175.9h1.5M552.5 199.3h1.5M553.5 185.0V212.7M552.0 199.3h1.5M553.5 209.3h1.5M559.5 179.7V199.3M558.0 183.5h1.5M559.5 195.3h1.5M560.5 189.2V204.6M559.0 195.3h1.5M560.5 200.9h1.5M564.5 193.3V215.4M563.0 191.0h1.5M564.5 195.5h1.5M566.5 192.9V196.4M565.0 195.5h1.5M566.5 196.3h1.5M569.5 191.7V212.1M568.0 194.5h1.5M569.5 205.4h1.5M575.5 206.1V233.5M574.0 197.2h1.5M575.5 223.2h1.5M576.5 218.0V267.5M575.0 223.2h1.5M576.5 261.9h1.5M582.5 224.0V254.3M581.0 225.8h1.5M582.5 246.1h1.5M585.5 229.0V247.3M584.0 244.3h1.5M585.5 245.4h1.5M596.5 237.1V244.6M595.0 235.0h1.5M596.5 239.3h1.5M598.5 243.3V270.0M597.0 239.3h1.5M598.5 245.7h1.5M600.5 249.8V255.8M599.0 245.7h1.5M600.5 252.3h1.5M601.5 254.8V279.7M600.0 252.3h1.5M601.5 259.5h1.5M603.5 254.1V276.2M602.0 259.5h1.5M603.5 272.2h1.5M608.5 251.2V268.8M607.0 254.5h1.5M608.5 257.3h1.5M612.5 246.4V261.1M611.0 251.6h1.5M612.5 255.0h1.5M616.5 246.3V269.7M615.0 246.6h1.5M616.5 267.8h1.5M617.5 248.1V279.5M616.0 267.8h1.5M617.5 276.4h1.5M628.5 225.5V236.4M627.0 225.5h1.5M628.5 226.3h1.5M630.5 193.3V395.0M629.0 226.3h1.5M630.5 258.4h1.5M631.5 276.6V305.7M630.0 258.4h1.5M631.5 295.8h1.5M633.5 293.5V340.0M632.0 295.8h1.5M633.5 301.1h1.5M635.5 302.7V322.8M634.0 301.1h1.5M635.5 307.3h1.5M637.5 308.9V330.1M636.0 307.3h1.5M637.5 328.5h1.5M640.5 313.7V328.6M639.0 317.5h1.5M640.5 326.5h1.5M646.5 315.4V334.6M645.0 317.3h1.5M646.5 322.4h1.5M647.5 319.4V331.9M646.0 322.4h1.5M647.5 325.2h1.5M649.5 319.5V328.3M648.0 325.2h1.5M649.5 325.9h1.5M653.5 314.6V334.7M652.0 323.5h1.5M653.5 332.7h1.5M656.5 328.0V343.1M655.0 331.8h1.5M656.5 334.9h1.5M660.5 324.1V331.5M659.0 325.5h1.5M660.5 326.5h1.5M662.5 324.7V346.2M661.0 326.5h1.5M662.5 339.8h1.5M665.5 325.9V330.5M664.0 327.7h1.5M665.5 328.3h1.5M667.5 326.4V351.0M666.0 328.3h1.5M667.5 331.2h1.5M669.5 336.6V344.9M668.0 331.2h1.5M669.5 344.9h1.5M671.5 345.5V363.4M670.0 344.9h1.5M671.5 347.9h1.5M672.5 353.8V378.5M671.0 347.9h1.5M672.5 361.1h1.5M674.5 355.7V378.5M673.0 361.1h1.5M674.5 374.4h1.5M678.5 369.8V377.9M677.0 373.9h1.5M678.5 376.6h1.5M681.5 357.4V378.5M680.0 362.7h1.5M681.5 369.0h1.5M687.5 343.7V349.4M686.0 347.0h1.5M687.5 347.9h1.5M688.5 341.4V350.4M687.0 347.9h1.5M688.5 348.8h1.5M692.5 346.6V352.5M691.0 348.6h1.5M692.5 350.5h1.5M694.5 331.9V353.8M693.0 350.5h1.5M694.5 350.8h1.5M708.5 286.4V303.3M707.0 287.7h1.5M708.5 299.9h1.5M722.5 281.9V301.7M721.0 283.4h1.5M722.5 283.9h1.5M724.5 283.1V296.8M723.0 283.9h1.5M724.5 291.6h1.5M727.5 280.1V294.2M726.0 286.4h1.5M727.5 287.4h1.5M729.5 273.1V299.0M728.0 287.4h1.5M729.5 294.9h1.5M738.5 269.0V276.3M737.0 266.3h1.5M738.5 276.2h1.5M740.5 274.7V288.4M739.0 276.2h1.5M740.5 284.6h1.5M742.5 282.2V304.4M741.0 284.6h1.5M742.5 287.6h1.5M745.5 287.2V313.7M744.0 286.6h1.5M745.5 305.0h1.5M749.5 293.5V326.4M748.0 304.0h1.5M749.5 315.2h1.5M752.5 295.5V302.9M751.0 295.5h1.5M752.5 301.0h1.5M759.5 289.1V308.0M758.0 290.8h1.5M759.5 304.1h1.5M763.5 291.6V308.1M762.0 293.3h1.5M763.5 299.9h1.5M765.5 290.7V307.2M764.0 299.9h1.5M765.5 305.7h1.5M770.5 298.5V312.2M769.0 297.8h1.5M770.5 304.8h1.5M772.5 301.7V318.2M771.0 304.8h1.5M772.5 306.2h1.5M773.5 305.8V307.8M772.0 306.2h1.5M773.5 307.5h1.5M775.5 312.0V323.2M774.0 307.5h1.5M775.5 313.8h1.5M777.5 318.2V340.0M776.0 313.8h1.5M777.5 320.1h1.5M779.5 321.2V331.0M778.0 320.1h1.5M779.5 329.2h1.5M782.5 322.4V331.8M781.0 323.5h1.5M782.5 327.8h1.5M786.5 323.5V337.4M785.0 324.5h1.5M786.5 324.9h1.5M795.5 288.0V300.7M794.0 289.9h1.5M795.5 292.6h1.5M797.5 291.3V305.2M796.0 292.6h1.5M797.5 300.0h1.5M805.5 283.6V287.0M804.0 284.3h1.5M805.5 284.9h1.5M807.5 284.1V286.1M806.0 284.9h1.5M807.5 285.6h1.5M809.5 283.9V299.4M808.0 285.6h1.5M809.5 292.3h1.5M811.5 291.8V298.3M810.0 292.3h1.5M811.5 296.3h1.5M814.5 280.8V299.4M813.0 286.1h1.5M814.5 297.5h1.5M820.5 276.9V293.0M819.0 290.6h1.5M820.5 291.8h1.5M823.5 286.7V291.2M822.0 286.5h1.5M823.5 287.8h1.5M825.5 292.0V301.6M824.0 287.8h1.5M825.5 292.9h1.5M827.5 294.5V297.2M826.0 292.9h1.5M827.5 295.5h1.5M829.5 296.3V307.7M828.0 295.5h1.5M829.5 300.3h1.5M830.5 297.3V313.8M829.0 300.3h1.5M830.5 312.4h1.5M837.5 310.8V317.1M836.0 310.6h1.5M837.5 314.2h1.5M839.5 312.3V323.0M838.0 314.2h1.5M839.5 314.5h1.5M841.5 319.0V330.6M840.0 314.5h1.5M841.5 323.8h1.5M843.5 325.2V338.0M842.0 323.8h1.5M843.5 327.4h1.5M844.5 334.5V337.2M843.0 327.4h1.5M844.5 335.6h1.5M846.5 339.7V351.0M845.0 335.6h1.5M846.5 340.8h1.5M850.5 337.3V341.5M849.0 339.3h1.5M850.5 339.6h1.5M852.5 338.7V341.3M851.0 339.6h1.5M852.5 340.4h1.5M855.5 332.6V343.9M854.0 334.8h1.5M855.5 342.3h1.5M860.5 328.2V342.4M859.0 330.6h1.5M860.5 336.6h1.5M864.5 327.1V367.0M863.0 329.3h1.5M864.5 329.4h1.5M866.5 326.6V332.3M865.0 329.4h1.5M866.5 330.4h1.5M871.5 325.2V348.8M870.0 327.8h1.5M871.5 328.9h1.5M873.5 330.9V342.4M872.0 328.9h1.5M873.5 333.1h1.5M875.5 335.1V350.0M874.0 333.1h1.5M875.5 340.9h1.5M876.5 339.7V359.6M875.0 340.9h1.5M876.5 341.3h1.5M878.5 341.1V349.3M877.0 341.3h1.5M878.5 342.9h1.5M880.5 342.3V348.2M879.0 342.9h1.5M880.5 345.7h1.5M884.5 344.5V357.4M883.0 344.9h1.5M884.5 356.1h1.5M889.5 348.8V355.6M888.0 353.7h1.5M889.5 354.4h1.5M892.5 348.9V352.6M891.0 349.0h1.5M892.5 351.3h1.5M900.5 350.5V355.0M899.0 345.4h1.5M900.5 351.5h1.5M901.5 359.4V362.0M900.0 351.5h1.5M901.5 360.5h1.5M903.5 346.7V409.0M902.0 360.5h1.5M903.5 369.6h1.5M905.5 377.1V380.1M904.0 369.6h1.5M905.5 378.7h1.5M907.5 386.0V406.8M906.0 378.7h1.5M907.5 387.9h1.5M908.5 390.5V396.3M907.0 387.9h1.5M908.5 392.5h1.5M910.5 394.0V415.4M909.0 392.5h1.5M910.5 396.1h1.5M914.5 394.4V409.8M913.0 394.8h1.5M914.5 408.6h1.5M933.5 372.4V379.2M932.0 373.7h1.5M933.5 375.5h1.5M935.5 372.4V381.0M934.0 375.5h1.5M935.5 377.9h1.5M937.5 376.9V380.0M936.0 377.9h1.5M937.5 379.4h1.5M944.5 364.3V369.7M943.0 366.3h1.5M944.5 367.6h1.5M947.5 359.6V370.3M946.0 362.0h1.5M947.5 365.7h1.5M949.5 361.7V373.2M948.0 365.7h1.5M949.5 372.0h1.5M955.5 366.0V378.9M954.0 366.0h1.5M955.5 372.4h1.5M958.5 369.9V376.4M957.0 369.5h1.5M958.5 376.0h1.5M962.5 371.9V385.8M961.0 373.1h1.5M962.5 384.0h1.5M969.5 369.8V377.4M968.0 373.8h1.5M969.5 375.3h1.5M974.5 371.8V377.7M973.0 371.9h1.5M974.5 375.7h1.5M976.5 372.4V381.0M975.0 375.7h1.5M976.5 377.9h1.5M983.5 373.7V382.0M982.0 374.4h1.5M983.5 381.8h1.5M986.5 374.4V385.4M985.0 376.6h1.5M986.5 382.4h1.5M988.5 380.6V387.2M987.0 382.4h1.5M988.5 386.0h1.5M992.5 384.6V387.0M991.0 384.7h1.5M992.5 385.8h1.5M1002.5 364.7V366.9M1001.0 365.9h1.5M1002.5 366.5h1.5M1004.5 363.3V369.9M1003.0 366.5h1.5M1004.5 366.6h1.5M1006.5 362.9V369.4M1005.0 366.6h1.5M1006.5 366.9h1.5M1008.5 362.9V369.4M1007.0 366.9h1.5M1008.5 368.4h1.5M1011.5 362.5V368.3M1010.0 365.0h1.5M1011.5 367.5h1.5M1015.5 364.8V369.6M1014.0 365.2h1.5M1015.5 368.8h1.5M1018.5 367.5V369.9M1017.0 366.3h1.5M1018.5 368.5h1.5M1020.5 367.7V380.6M1019.0 368.5h1.5M1020.5 377.9h1.5M1022.5 364.4V382.3M1021.0 377.9h1.5M1022.5 380.3h1.5M1027.5 355.0V364.4M1026.0 362.4h1.5M1027.5 362.9h1.5M1033.5 357.0V364.2M1032.0 358.5h1.5M1033.5 361.3h1.5M1036.5 360.0V370.0M1035.0 359.6h1.5M1036.5 362.2h1.5M1038.5 364.0V366.0M1037.0 362.2h1.5M1038.5 364.8h1.5M1040.5 366.8V369.7M1039.0 364.8h1.5M1040.5 368.9h1.5M1042.5 368.4V373.0M1041.0 368.9h1.5M1042.5 368.9h1.5M1043.5 367.5V370.9M1042.0 368.9h1.5M1043.5 369.9h1.5M1047.5 371.4V376.4M1046.0 367.5h1.5M1047.5 372.9h1.5M1049.5 375.8V388.7M1048.0 372.9h1.5M1049.5 377.1h1.5M1050.5 376.8V378.8M1049.0 377.1h1.5M1050.5 378.6h1.5M1054.5 377.2V384.4M1053.0 377.7h1.5M1054.5 382.2h1.5M1059.5 375.8V380.6M1058.0 379.2h1.5M1059.5 379.8h1.5M1061.5 378.7V382.4M1060.0 379.8h1.5M1061.5 381.9h1.5M1065.5 378.7V389.8M1064.0 380.5h1.5M1065.5 388.8h1.5M1066.5 384.4V394.4M1065.0 388.8h1.5M1066.5 393.7h1.5M1072.5 391.3V394.0M1071.0 391.2h1.5M1072.5 392.2h1.5M1073.5 392.7V398.7M1072.0 392.2h1.5M1073.5 393.3h1.5M1077.5 392.4V397.5M1076.0 393.3h1.5M1077.5 397.0h1.5M1082.5 392.4V395.5M1081.0 394.6h1.5M1082.5 395.0h1.5M1093.5 382.9V385.6M1092.0 383.3h1.5M1093.5 384.9h1.5M1097.5 385.5V391.6M1096.0 384.7h1.5M1097.5 386.1h1.5M1098.5 388.8V390.8M1097.0 386.1h1.5M1098.5 389.4h1.5M1100.5 392.6V395.0M1099.0 389.4h1.5M1100.5 393.8h1.5M1102.5 391.6V415.9M1101.0 393.8h1.5M1102.5 397.1h1.5M1104.5 400.3V402.3M1103.0 397.1h1.5M1104.5 400.9h1.5M1105.5 404.1V406.5M1104.0 400.9h1.5M1105.5 406.0h1.5M1107.5 407.2V414.5M1106.0 406.0h1.5M1107.5 408.0h1.5M1109.5 407.3V409.4M1108.0 408.0h1.5M1109.5 408.5h1.5M1116.5 407.9V409.9M1115.0 406.6h1.5M1116.5 408.5h1.5M1118.5 409.7V416.8M1117.0 408.5h1.5M1118.5 416.1h1.5M1121.5 413.3V417.9M1120.0 412.3h1.5M1121.5 416.4h1.5M1123.5 415.1V427.4M1122.0 416.4h1.5M1123.5 418.5h1.5M1127.5 415.9V425.6M1126.0 417.0h1.5M1127.5 424.1h1.5M1130.5 418.3V427.4M1129.0 418.4h1.5M1130.5 426.5h1.5M1132.5 426.1V430.0M1131.0 426.5h1.5M1132.5 429.0h1.5M1139.5 426.9V440.2M1138.0 426.7h1.5M1139.5 433.5h1.5M1141.5 428.3V439.7M1140.0 433.5h1.5M1141.5 438.5h1.5M1148.5 430.1V433.4M1147.0 431.3h1.5M1148.5 431.8h1.5M1153.5 421.8V429.2M1152.0 426.3h1.5M1153.5 428.4h1.5M1160.5 416.4V421.6M1159.0 417.2h1.5M1160.5 421.2h1.5M1166.5 412.5V416.2M1165.0 412.8h1.5M1166.5 413.3h1.5M1168.5 413.0V415.0M1167.0 413.3h1.5M1168.5 413.9h1.5M1169.5 413.7V415.7M1168.0 413.9h1.5M1169.5 414.5h1.5M1171.5 414.4V421.6M1170.0 414.5h1.5M1171.5 415.7h1.5M1175.5 393.8V414.4M1174.0 409.3h1.5M1175.5 412.3h1.5M1180.5 392.7V400.1M1179.0 393.1h1.5M1180.5 393.9h1.5M1182.5 394.0V397.0M1181.0 393.9h1.5M1182.5 395.1h1.5M1184.5 395.4V404.4M1183.0 395.1h1.5M1184.5 397.6h1.5M1185.5 396.9V402.0M1184.0 397.6h1.5M1185.5 401.9h1.5M1194.5 385.1V387.1M1193.0 385.5h1.5M1194.5 386.6h1.5M1196.5 385.6V397.3M1195.0 386.6h1.5M1196.5 386.7h1.5M1199.5 385.3V391.8M1198.0 385.9h1.5M1199.5 391.1h1.5M1205.5 387.6V393.9M1204.0 386.9h1.5M1205.5 388.5h1.5M1207.5 389.6V392.1M1206.0 388.5h1.5M1207.5 390.3h1.5M1208.5 391.1V398.9M1207.0 390.3h1.5M1208.5 391.9h1.5M1212.5 381.3V398.9M1211.0 386.8h1.5M1212.5 389.9h1.5M1214.5 389.6V397.7M1213.0 389.9h1.5M1214.5 391.3h1.5M1215.5 395.1V405.1M1214.0 391.3h1.5M1215.5 396.5h1.5M1217.5 398.3V401.9M1216.0 396.5h1.5M1217.5 399.2h1.5M1219.5 398.6V408.9M1218.0 399.2h1.5M1219.5 399.5h1.5M1230.5 390.4V392.9M1229.0 391.9h1.5M1230.5 392.5h1.5M1233.5 388.6V391.4M1232.0 389.5h1.5M1233.5 390.8h1.5M1239.5 383.4V392.0M1238.0 387.4h1.5M1239.5 390.9h1.5M1244.5 381.5V391.5M1243.0 388.4h1.5M1244.5 389.2h1.5M1249.5 388.6V390.6M1248.0 388.3h1.5M1249.5 389.1h1.5M1251.5 389.4V391.9M1250.0 389.1h1.5M1251.5 391.6h1.5M1253.5 390.0V393.9M1252.0 391.6h1.5M1253.5 391.7h1.5M1255.5 390.7V393.3M1254.0 391.7h1.5M1255.5 393.1h1.5M1260.5 387.4V390.1M1259.0 389.1h1.5M1260.5 389.9h1.5M1262.5 386.3V392.6M1261.0 389.9h1.5M1262.5 391.7h1.5M1269.5 383.7V389.6M1268.0 384.5h1.5M1269.5 387.1h1.5M1274.5 381.4V385.7M1273.0 381.7h1.5M1274.5 384.2h1.5M1281.5 373.2V375.2M1280.0 374.1h1.5M1281.5 374.9h1.5M1283.5 373.2V382.6M1282.0 374.9h1.5M1283.5 375.0h1.5M1288.5 373.2V377.2M1287.0 373.8h1.5M1288.5 376.3h1.5M1290.5 373.1V376.6M1289.0 376.3h1.5M1290.5 376.5h1.5M1295.5 365.4V371.6M1294.0 365.5h1.5M1295.5 367.8h1.5M1297.5 368.6V378.8M1296.0 367.8h1.5M1297.5 369.6h1.5M1299.5 372.8V379.6M1298.0 369.6h1.5M1299.5 378.9h1.5M1302.5 379.1V382.0M1301.0 377.5h1.5M1302.5 379.6h1.5M1304.5 380.8V386.3M1303.0 379.6h1.5M1304.5 381.3h1.5M1306.5 381.9V384.5M1305.0 381.3h1.5M1306.5 382.4h1.5M1308.5 382.8V384.9M1307.0 382.4h1.5M1308.5 383.3h1.5M1310.5 383.7V387.6M1309.0 383.3h1.5M1310.5 384.1h1.5M1311.5 383.8V386.6M1310.0 384.1h1.5M1311.5 386.3h1.5M1324.5 379.0V383.3M1323.0 379.4h1.5M1324.5 382.7h1.5M1326.5 377.6V385.0M1325.0 382.7h1.5M1326.5 383.1h1.5M1329.5 383.8V408.3M1328.0 383.1h1.5M1329.5 384.9h1.5M1331.5 388.0V394.5M1330.0 384.9h1.5M1331.5 393.6h1.5M1333.5 392.8V398.4M1332.0 393.6h1.5M1333.5 397.7h1.5M1340.5 390.0V400.0M1339.0 393.2h1.5M1340.5 393.8h1.5M1343.5 394.4V398.2M1342.0 393.0h1.5M1343.5 395.2h1.5M1345.5 396.4V402.6M1344.0 395.2h1.5M1345.5 397.0h1.5M1349.5 396.4V401.7M1348.0 397.0h1.5M1349.5 399.5h1.5M1352.5 397.8V399.8M1351.0 397.2h1.5M1352.5 398.3h1.5M1354.5 398.8V400.8M1353.0 398.3h1.5M1354.5 399.3h1.5M1356.5 399.8V405.1M1355.0 399.3h1.5M1356.5 400.3h1.5M1357.5 400.3V402.3M1356.0 400.3h1.5M1357.5 400.9h1.5M1359.5 400.7V406.4M1358.0 400.9h1.5M1359.5 405.8h1.5M1363.5 401.4V407.6M1362.0 402.2h1.5M1363.5 405.2h1.5M1365.5 404.5V408.6M1364.0 405.2h1.5M1365.5 407.8h1.5M1368.5 402.5V411.4M1367.0 403.3h1.5M1368.5 403.4h1.5M1370.5 402.8V408.2M1369.0 403.4h1.5M1370.5 407.7h1.5M1373.5 405.6V407.6M1372.0 406.4h1.5M1373.5 406.8h1.5M1377.5 399.7V405.0M1376.0 402.8h1.5M1377.5 404.8h1.5M1381.5 393.9V404.1M1380.0 398.5h1.5M1381.5 401.6h1.5M1388.5 387.8V394.0M1387.0 390.2h1.5M1388.5 391.7h1.5M1391.5 383.6V391.1M1390.0 387.3h1.5M1391.5 390.0h1.5M1393.5 382.6V397.6M1392.0 390.0h1.5M1393.5 395.7h1.5M1397.5 394.2V401.0M1396.0 389.1h1.5M1397.5 394.9h1.5M1398.5 396.6V398.6M1397.0 394.9h1.5M1398.5 397.2h1.5M1400.5 398.3V400.6M1399.0 397.2h1.5M1400.5 398.9h1.5M1402.5 399.6V405.8M1401.0 398.9h1.5M1402.5 400.3h1.5M1404.5 398.7V402.3M1403.0 400.3h1.5M1404.5 401.1h1.5M1407.5 399.1V404.8M1406.0 399.5h1.5M1407.5 401.1h1.5M1412.5 398.3V401.3M1411.0 398.0h1.5M1412.5 398.8h1.5M1414.5 399.1V401.1M1413.0 398.8h1.5M1414.5 399.7h1.5M1416.5 399.8V405.8M1415.0 399.7h1.5M1416.5 400.5h1.5M1418.5 400.0V405.2M1417.0 400.5h1.5M1418.5 403.3h1.5M1427.5 398.6V405.8M1426.0 399.4h1.5M1427.5 400.7h1.5M1428.5 403.2V425.0M1427.0 400.7h1.5M1428.5 404.0h1.5M1430.5 406.4V414.4M1429.0 404.0h1.5M1430.5 411.7h1.5M1434.5 406.4V420.7M1433.0 410.1h1.5M1434.5 418.0h1.5M1436.5 404.6V422.5M1435.0 418.0h1.5M1436.5 419.2h1.5M1439.5 404.6V413.0M1438.0 406.9h1.5M1439.5 412.9h1.5M1443.5 408.8V419.0M1442.0 409.0h1.5M1443.5 414.3h1.5M1444.5 411.4V418.5M1443.0 414.3h1.5M1444.5 417.6h1.5M1452.5 410.5V416.8M1451.0 410.4h1.5M1452.5 413.5h1.5M1455.5 412.2V416.0M1454.0 412.1h1.5M1455.5 414.9h1.5M1457.5 413.8V416.2M1456.0 414.9h1.5M1457.5 416.0h1.5M1460.5 415.2V417.2M1459.0 414.6h1.5M1460.5 415.7h1.5M1462.5 416.4V418.4M1461.0 415.7h1.5M1462.5 417.1h1.5M1464.5 417.6V428.0M1463.0 417.1h1.5M1464.5 421.9h1.5M1466.5 423.3V432.9M1465.0 421.9h1.5M1466.5 424.5h1.5M1468.5 430.9V451.2M1467.0 424.5h1.5M1468.5 432.5h1.5M1469.5 437.9V442.0M1468.0 432.5h1.5M1469.5 439.4h1.5M1471.5 444.2V446.3M1470.0 439.4h1.5M1471.5 445.3h1.5M1473.5 450.6V458.3M1472.0 445.3h1.5M1473.5 451.3h1.5M1475.5 452.7V454.7M1474.0 451.3h1.5M1475.5 453.5h1.5M1476.5 453.4V461.9M1475.0 453.5h1.5M1476.5 458.1h1.5M1480.5 451.2V459.5M1479.0 454.8h1.5M1480.5 458.8h1.5M1499.5 438.1V441.8M1498.0 438.6h1.5M1499.5 440.4h1.5" stroke="#ef5350" stroke-width="1" fill="none"/>
<path d="M12.0 170.3 L13.5 171.1 L15.0 172.2 L16.5 173.5 L18.0 175.0 L19.5 176.4 L21.0 177.5 L22.5 178.2 L24.0 178.2 L25.5 177.8 L27.0 177.1 L28.5 176.3 L30.0 175.5 L31.5 174.7 L33.0 173.9 L34.5 173.1 L36.0 172.3 L37.5 171.6 L39.0 170.9 L40.5 170.3 L42.0 169.7 L43.5 169.1 L45.0 168.5 L46.5 167.9 L48.0 167.2 L49.5 166.5 L51.0 165.7 L52.5 164.7 L54.0 163.7 L55.5 162.5 L57.0 161.3 L58.5 160.1 L60.0 158.8 L61.5 157.6 L63.0 156.4 L64.5 155.2 L66.0 154.0 L67.5 152.8 L69.0 151.6 L70.5 150.5 L72.0 149.7 L73.5 149.2 L75.0 149.1 L76.5 149.4 L78.0 149.9 L79.5 150.8 L81.0 151.9 L82.5 153.2 L84.0 154.5 L85.5 155.8 L87.0 157.2 L88.5 158.6 L90.0 159.9 L91.5 161.3 L93.0 162.8 L94.5 164.2 L96.0 165.7 L97.5 167.2 L99.0 168.7 L100.5 170.2 L102.0 171.6 L103.5 173.1 L105.0 174.6 L106.5 176.1 L108.0 177.5 L109.5 178.9 L111.0 180.2 L112.5 181.5 L114.0 182.8 L115.5 184.1 L117.0 185.4 L118.5 186.7 L120.0 188.0 L121.5 189.2 L123.0 190.5 L124.5 191.7 L126.0 192.7 L127.5 193.5 L129.0 193.8 L130.5 193.8 L132.0 193.6 L133.5 193.2 L135.0 192.8 L136.5 192.4 L138.0 191.9 L139.5 191.5 L141.0 191.1 L142.5 190.6 L144.0 190.2 L145.5 189.8 L147.0 189.3 L148.5 188.7 L150.0 188.2 L151.5 187.6 L153.0 187.0 L154.5 186.5 L156.0 185.9 L157.5 185.3 L159.0 184.7 L160.5 184.1 L162.0 183.5 L163.5 183.0 L165.0 182.4 L166.5 181.8 L168.0 181.3 L169.5 180.8 L171.0 180.4 L172.5 180.2 L174.0 180.2 L175.5 180.3 L177.0 180.6 L178.5 181.0 L180.0 181.7 L181.5 182.6 L183.0 183.7 L184.5 185.0 L186.0 186.3 L187.5 187.7 L189.0 189.1 L190.5 190.6 L192.0 192.3 L193.5 194.2 L195.0 196.2 L196.5 198.2 L198.0 200.3 L199.5 202.4 L201.0 204.6 L202.5 206.8 L204.0 209.0 L205.5 211.3 L207.0 213.5 L208.5 215.8 L210.0 218.1 L211.5 220.3 L213.0 222.6 L214.5 224.8 L216.0 227.0 L217.5 229.2 L219.0 231.1 L220.5 233.0 L222.0 234.6 L223.5 236.2 L225.0 237.7 L226.5 239.2 L228.0 240.6 L229.5 242.1 L231.0 243.6 L232.5 245.0 L234.0 246.4 L235.5 247.5 L237.0 248.4 L238.5 249.0 L240.0 249.6 L241.5 250.0 L243.0 250.5 L244.5 250.9 L246.0 251.3 L247.5 251.6 L249.0 251.7 L250.5 251.6 L252.0 251.2 L253.5 250.7 L255.0 250.2 L256.5 249.6 L258.0 249.0 L259.5 248.4 L261.0 247.7 L262.5 246.9 L264.0 245.9 L265.5 244.7 L267.0 243.5 L268.5 242.2 L270.0 240.8 L271.5 239.5 L273.0 238.2 L274.5 237.0 L276.0 235.9 L277.5 235.0 L279.0 234.1 L280.5 233.3 L282.0 232.5 L283.5 231.7 L285.0 230.9 L286.5 230.0 L288.0 229.2 L289.5 228.4 L291.0 227.4 L292.5 226.3 L294.0 224.9 L295.5 223.2 L297.0 221.4 L298.5 219.4 L300.0 217.4 L301.5 215.4 L303.0 213.4 L304.5 211.4 L306.0 209.4 L307.5 207.4 L309.0 205.6 L310.5 203.8 L312.0 202.2 L313.5 200.6 L315.0 199.1 L316.5 197.6 L318.0 196.2 L319.5 194.7 L321.0 193.2 L322.5 191.6 L324.0 190.1 L325.5 188.4 L327.0 186.7 L328.5 184.7 L330.0 182.8 L331.5 180.7 L333.0 178.6 L334.5 176.5 L336.0 174.3 L337.5 172.0 L339.0 169.6 L340.5 167.0 L342.0 164.4 L343.5 161.8 L345.0 159.2 L346.5 156.5 L348.0 153.9 L349.5 151.3 L351.0 148.8 L352.5 146.5 L354.0 144.6 L355.5 143.1 L357.0 141.8 L358.5 140.7 L360.0 139.6 L361.5 138.6 L363.0 137.6 L364.5 136.6 L366.0 135.5 L367.5 134.5 L369.0 133.5 L370.5 132.5 L372.0 131.5 L373.5 130.7 L375.0 130.1 L376.5 129.9 L378.0 129.9 L379.5 130.2 L381.0 130.6 L382.5 131.0 L384.0 131.5 L385.5 131.9 L387.0 132.5 L388.5 133.2 L390.0 134.1 L391.5 135.2 L393.0 136.4 L394.5 137.7 L396.0 139.1 L397.5 140.4 L399.0 141.8 L400.5 143.2 L402.0 144.5 L403.5 145.9 L405.0 147.3 L406.5 148.6 L408.0 150.0 L409.5 151.4 L411.0 152.8 L412.5 154.1 L414.0 155.5 L415.5 157.0 L417.0 158.4 L418.5 160.0 L420.0 161.5 L421.5 163.1 L423.0 164.7 L424.5 166.3 L426.0 167.9 L427.5 169.4 L429.0 170.8 L430.5 171.9 L432.0 172.7 L433.5 173.0 L435.0 173.1 L436.5 172.9 L438.0 172.7 L439.5 172.5 L441.0 172.3 L442.5 172.1 L444.0 171.7 L445.5 171.2 L447.0 170.4 L448.5 169.3 L450.0 168.0 L451.5 166.6 L453.0 165.1 L454.5 163.6 L456.0 162.1 L457.5 160.6 L459.0 159.1 L460.5 157.6 L462.0 156.1 L463.5 154.6 L465.0 153.2 L466.5 151.9 L468.0 150.6 L469.5 149.3 L471.0 148.1 L472.5 146.9 L474.0 145.7 L475.5 144.5 L477.0 143.2 L478.5 142.0 L480.0 140.8 L481.5 139.6 L483.0 138.4 L484.5 137.3 L486.0 136.3 L487.5 135.5 L489.0 135.2 L490.5 135.0 L492.0 135.1 L493.5 135.3 L495.0 135.5 L496.5 135.7 L498.0 135.9 L499.5 136.1 L501.0 136.4 L502.5 136.6 L504.0 136.8 L505.5 137.1 L507.0 137.4 L508.5 137.7 L510.0 138.1 L511.5 138.6 L513.0 139.1 L514.5 139.5 L516.0 140.0 L517.5 140.4 L519.0 140.9 L520.5 141.4 L522.0 141.8 L523.5 142.3 L525.0 142.8 L526.5 143.2 L528.0 143.7 L529.5 144.2 L531.0 144.8 L532.5 145.3 L534.0 145.8 L535.5 146.4 L537.0 146.9 L538.5 147.5 L540.0 148.0 L541.5 148.6 L543.0 149.1 L544.5 149.7 L546.0 150.4 L547.5 151.2 L549.0 152.2 L550.5 153.4 L552.0 154.7 L553.5 156.1 L555.0 157.5 L556.5 158.9 L558.0 160.3 L559.5 161.7 L561.0 163.1 L562.5 164.5 L564.0 165.9 L565.5 167.3 L567.0 168.8 L568.5 170.3 L570.0 172.0 L571.5 173.9 L573.0 176.0 L574.5 178.2 L576.0 180.4 L577.5 182.7 L579.0 184.9 L580.5 187.1 L582.0 189.4 L583.5 191.6 L585.0 193.9 L586.5 196.4 L588.0 198.9 L589.5 201.6 L591.0 204.3 L592.5 207.0 L594.0 209.8 L595.5 212.5 L597.0 215.2 L598.5 217.8 L600.0 220.3 L601.5 222.5 L603.0 224.6 L604.5 226.6 L606.0 228.5 L607.5 230.4 L609.0 232.3 L610.5 234.3 L612.0 236.2 L613.5 238.1 L615.0 240.0 L616.5 241.7 L618.0 243.3 L619.5 244.5 L621.0 245.3 L622.5 245.9 L624.0 246.3 L625.5 246.9 L627.0 247.7 L628.5 249.0 L630.0 250.7 L631.5 252.6 L633.0 254.6 L634.5 256.7 L636.0 258.8 L637.5 260.8 L639.0 262.9 L640.5 264.9 L642.0 266.8 L643.5 268.6 L645.0 270.3 L646.5 272.1 L648.0 273.8 L649.5 275.5 L651.0 277.2 L652.5 278.9 L654.0 280.7 L655.5 282.4 L657.0 284.2 L658.5 286.0 L660.0 288.1 L661.5 290.4 L663.0 292.9 L664.5 295.5 L666.0 298.2 L667.5 300.9 L669.0 303.6 L670.5 306.5 L672.0 309.5 L673.5 312.9 L675.0 316.8 L676.5 321.2 L678.0 325.8 L679.5 330.3 L681.0 334.3 L682.5 337.3 L684.0 339.2 L685.5 340.3 L687.0 340.9 L688.5 341.3 L690.0 341.6 L691.5 341.9 L693.0 342.1 L694.5 342.2 L696.0 342.1 L697.5 341.6 L699.0 341.0 L700.5 340.2 L702.0 339.4 L703.5 338.5 L705.0 337.7 L706.5 336.8 L708.0 336.0 L709.5 335.1 L711.0 334.2 L712.5 333.3 L714.0 332.1 L715.5 330.7 L717.0 329.0 L718.5 327.1 L720.0 325.0 L721.5 322.9 L723.0 320.7 L724.5 318.6 L726.0 316.4 L727.5 314.3 L729.0 312.1 L730.5 310.0 L732.0 308.0 L733.5 306.0 L735.0 304.2 L736.5 302.6 L738.0 301.2 L739.5 299.8 L741.0 298.4 L742.5 297.0 L744.0 295.7 L745.5 294.5 L747.0 293.5 L748.5 292.8 L750.0 292.5 L751.5 292.4 L753.0 292.5 L754.5 292.6 L756.0 292.7 L757.5 292.9 L759.0 293.0 L760.5 293.1 L762.0 293.3 L763.5 293.6 L765.0 293.9 L766.5 294.4 L768.0 294.9 L769.5 295.5 L771.0 296.1 L772.5 296.7 L774.0 297.3 L775.5 297.9 L777.0 298.7 L778.5 299.5 L780.0 300.5 L781.5 301.6 L783.0 302.8 L784.5 304.0 L786.0 305.2 L787.5 306.4 L789.0 307.5 L790.5 308.5 L792.0 309.2 L793.5 309.7 L795.0 309.9 L796.5 310.0 L798.0 310.0 L799.5 309.9 L801.0 309.7 L802.5 309.4 L804.0 309.1 L805.5 308.8 L807.0 308.4 L808.5 308.1 L810.0 307.7 L811.5 307.3 L813.0 306.9 L814.5 306.4 L816.0 305.9 L817.5 305.4 L819.0 304.8 L820.5 304.3 L822.0 303.7 L823.5 303.2 L825.0 302.7 L826.5 302.2 L828.0 301.8 L829.5 301.4 L831.0 301.1 L832.5 300.8 L834.0 300.6 L835.5 300.3 L837.0 300.1 L838.5 300.1 L840.0 300.2 L841.5 300.7 L843.0 301.6 L844.5 302.6 L846.0 303.9 L847.5 305.1 L849.0 306.4 L850.5 307.7 L852.0 309.0 L853.5 310.3 L855.0 311.6 L856.5 312.9 L858.0 314.3 L859.5 315.6 L861.0 317.0 L862.5 318.4 L864.0 319.8 L865.5 321.2 L867.0 322.6 L868.5 324.0 L870.0 325.3 L871.5 326.7 L873.0 328.0 L874.5 329.3 L876.0 330.5 L877.5 331.8 L879.0 333.1 L880.5 334.3 L882.0 335.6 L883.5 336.8 L885.0 337.9 L886.5 338.9 L888.0 339.7 L889.5 340.5 L891.0 341.1 L892.5 341.8 L894.0 342.5 L895.5 343.1 L897.0 343.9 L898.5 344.9 L900.0 346.0 L901.5 347.3 L903.0 348.7 L904.5 350.2 L906.0 351.7 L907.5 353.2 L909.0 354.7 L910.5 356.2 L912.0 357.7 L913.5 359.2 L915.0 360.7 L916.5 362.2 L918.0 363.7 L919.5 365.2 L921.0 366.7 L922.5 368.2 L924.0 369.6 L925.5 371.0 L927.0 372.2 L928.5 373.3 L930.0 374.3 L931.5 375.2 L933.0 376.1 L934.5 377.0 L936.0 377.9 L937.5 378.7 L939.0 379.4 L940.5 380.1 L942.0 380.7 L943.5 381.2 L945.0 381.7 L946.5 382.1 L948.0 382.6 L949.5 383.0 L951.0 383.3 L952.5 383.5 L954.0 383.4 L955.5 383.0 L957.0 382.4 L958.5 381.7 L960.0 380.9 L961.5 380.1 L963.0 379.3 L964.5 378.5 L966.0 377.7 L967.5 377.0 L969.0 376.4 L970.5 375.9 L972.0 375.6 L973.5 375.5 L975.0 375.3 L976.5 375.2 L978.0 375.1 L979.5 375.0 L981.0 374.9 L982.5 374.8 L984.0 374.7 L985.5 374.6 L987.0 374.6 L988.5 374.5 L990.0 374.5 L991.5 374.5 L993.0 374.4 L994.5 374.4 L996.0 374.4 L997.5 374.3 L999.0 374.2 L1000.5 374.1 L1002.0 374.0 L1003.5 373.8 L1005.0 373.6 L1006.5 373.3 L1008.0 373.1 L1009.5 372.9 L1011.0 372.7 L1012.5 372.5 L1014.0 372.2 L1015.5 372.0 L1017.0 371.7 L1018.5 371.5 L1020.0 371.2 L1021.5 370.9 L1023.0 370.7 L1024.5 370.4 L1026.0 370.2 L1027.5 369.9 L1029.0 369.6 L1030.5 369.4 L1032.0 369.1 L1033.5 368.9 L1035.0 368.7 L1036.5 368.5 L1038.0 368.3 L1039.5 368.2 L1041.0 368.0 L1042.5 367.9 L1044.0 367.8 L1045.5 367.8 L1047.0 367.9 L1048.5 368.2 L1050.0 368.5 L1051.5 368.8 L1053.0 369.2 L1054.5 369.5 L1056.0 369.9 L1057.5 370.2 L1059.0 370.7 L1060.5 371.1 L1062.0 371.7 L1063.5 372.3 L1065.0 372.9 L1066.5 373.5 L1068.0 374.2 L1069.5 374.8 L1071.0 375.5 L1072.5 376.1 L1074.0 376.7 L1075.5 377.4 L1077.0 378.0 L1078.5 378.7 L1080.0 379.4 L1081.5 380.1 L1083.0 380.8 L1084.5 381.6 L1086.0 382.3 L1087.5 383.1 L1089.0 383.8 L1090.5 384.5 L1092.0 385.3 L1093.5 386.0 L1095.0 386.8 L1096.5 387.5 L1098.0 388.3 L1099.5 389.0 L1101.0 389.8 L1102.5 390.5 L1104.0 391.2 L1105.5 391.9 L1107.0 392.6 L1108.5 393.3 L1110.0 394.1 L1111.5 394.8 L1113.0 395.5 L1114.5 396.2 L1116.0 396.9 L1117.5 397.6 L1119.0 398.3 L1120.5 399.1 L1122.0 399.8 L1123.5 400.5 L1125.0 401.2 L1126.5 402.0 L1128.0 402.8 L1129.5 403.6 L1131.0 404.6 L1132.5 405.6 L1134.0 406.6 L1135.5 407.7 L1137.0 408.7 L1138.5 409.7 L1140.0 410.8 L1141.5 411.8 L1143.0 412.9 L1144.5 414.0 L1146.0 415.1 L1147.5 416.2 L1149.0 417.4 L1150.5 418.5 L1152.0 419.5 L1153.5 420.5 L1155.0 421.3 L1156.5 421.9 L1158.0 422.3 L1159.5 422.7 L1161.0 423.1 L1162.5 423.4 L1164.0 423.7 L1165.5 424.1 L1167.0 424.4 L1168.5 424.5 L1170.0 424.6 L1171.5 424.3 L1173.0 423.9 L1174.5 423.3 L1176.0 422.6 L1177.5 421.9 L1179.0 421.3 L1180.5 420.6 L1182.0 419.9 L1183.5 419.1 L1185.0 418.3 L1186.5 417.5 L1188.0 416.5 L1189.5 415.4 L1191.0 414.3 L1192.5 413.2 L1194.0 412.1 L1195.5 411.0 L1197.0 409.9 L1198.5 408.8 L1200.0 407.7 L1201.5 406.8 L1203.0 405.8 L1204.5 404.9 L1206.0 404.0 L1207.5 403.1 L1209.0 402.2 L1210.5 401.4 L1212.0 400.6 L1213.5 399.8 L1215.0 399.1 L1216.5 398.5 L1218.0 397.9 L1219.5 397.3 L1221.0 396.7 L1222.5 396.2 L1224.0 395.6 L1225.5 395.2 L1227.0 394.9 L1228.5 394.6 L1230.0 394.3 L1231.5 394.1 L1233.0 393.9 L1234.5 393.6 L1236.0 393.4 L1237.5 393.2 L1239.0 393.0 L1240.5 392.8 L1242.0 392.7 L1243.5 392.6 L1245.0 392.5 L1246.5 392.4 L1248.0 392.4 L1249.5 392.3 L1251.0 392.3 L1252.5 392.2 L1254.0 392.2 L1255.5 392.1 L1257.0 392.1 L1258.5 392.0 L1260.0 391.8 L1261.5 391.6 L1263.0 391.2 L1264.5 390.9 L1266.0 390.5 L1267.5 390.1 L1269.0 389.8 L1270.5 389.4 L1272.0 389.0 L1273.5 388.7 L1275.0 388.3 L1276.5 387.9 L1278.0 387.5 L1279.5 387.2 L1281.0 386.8 L1282.5 386.4 L1284.0 386.0 L1285.5 385.7 L1287.0 385.3 L1288.5 384.9 L1290.0 384.5 L1291.5 384.2 L1293.0 383.8 L1294.5 383.4 L1296.0 383.1 L1297.5 382.7 L1299.0 382.4 L1300.5 382.1 L1302.0 381.8 L1303.5 381.6 L1305.0 381.4 L1306.5 381.2 L1308.0 381.0 L1309.5 380.8 L1311.0 380.6 L1312.5 380.4 L1314.0 380.2 L1315.5 380.0 L1317.0 379.8 L1318.5 379.7 L1320.0 379.5 L1321.5 379.3 L1323.0 379.2 L1324.5 379.3 L1326.0 379.5 L1327.5 379.8 L1329.0 380.3 L1330.5 380.9 L1332.0 381.5 L1333.5 382.1 L1335.0 382.7 L1336.5 383.3 L1338.0 383.9 L1339.5 384.5 L1341.0 385.1 L1342.5 385.7 L1344.0 386.3 L1345.5 386.9 L1347.0 387.5 L1348.5 388.1 L1350.0 388.7 L1351.5 389.3 L1353.0 389.9 L1354.5 390.5 L1356.0 391.1 L1357.5 391.8 L1359.0 392.4 L1360.5 393.1 L1362.0 393.7 L1363.5 394.4 L1365.0 395.1 L1366.5 395.7 L1368.0 396.4 L1369.5 397.0 L1371.0 397.7 L1372.5 398.4 L1374.0 399.0 L1375.5 399.5 L1377.0 400.0 L1378.5 400.2 L1380.0 400.3 L1381.5 400.2 L1383.0 400.1 L1384.5 399.9 L1386.0 399.7 L1387.5 399.5 L1389.0 399.4 L1390.5 399.3 L1392.0 399.2 L1393.5 399.1 L1395.0 399.0 L1396.5 399.0 L1398.0 398.9 L1399.5 398.9 L1401.0 398.8 L1402.5 398.8 L1404.0 398.7 L1405.5 398.7 L1407.0 398.7 L1408.5 398.6 L1410.0 398.6 L1411.5 398.6 L1413.0 398.6 L1414.5 398.6 L1416.0 398.6 L1417.5 398.6 L1419.0 398.6 L1420.5 398.6 L1422.0 398.6 L1423.5 398.7 L1425.0 398.8 L1426.5 399.0 L1428.0 399.3 L1429.5 399.7 L1431.0 400.2 L1432.5 400.6 L1434.0 401.1 L1435.5 401.6 L1437.0 402.1 L1438.5 402.6 L1440.0 403.2 L1441.5 403.8 L1443.0 404.4 L1444.5 405.1 L1446.0 405.7 L1447.5 406.3 L1449.0 406.9 L1450.5 407.5 L1452.0 408.1 L1453.5 408.6 L1455.0 409.1 L1456.5 409.5 L1458.0 410.0 L1459.5 410.5 L1461.0 410.9 L1462.5 411.5 L1464.0 412.2 L1465.5 413.0 L1467.0 414.0 L1468.5 415.0 L1470.0 416.1 L1471.5 417.2 L1473.0 418.4 L1474.5 419.6 L1476.0 420.8 L1477.5 422.0 L1479.0 423.2 L1480.5 424.4 L1482.0 425.6 L1483.5 426.8 L1485.0 428.0 L1486.5 429.2 L1488.0 430.4 L1489.5 431.5 L1491.0 432.7 L1492.5 433.7 L1494.0 434.6 L1495.5 435.3 L1497.0 435.8 L1498.5 436.3 L1500.0 436.7 L1501.5 437.1 L1503.0 437.4 L1504.5 437.7 L1506.0 437.9" stroke="#3f8bd8" stroke-width="1.35" fill="none" stroke-linejoin="round"/>
</g>

<!-- RSI pane -->
<g clip-path="url(#cr)">
<rect x="12" y="550" width="1514" height="132" fill="#7e57c2" opacity="0.1"/>
<g stroke="#8a8a8a" stroke-width="1" stroke-dasharray="5 6">
<path d="M11 549.5H1524M11 615.5H1524M11 682.5H1524"/>
</g>
<path d="M12 682.5 L12.1 625.8 L13.4 645.9 L15.2 633.0 L17.0 620.1 L18.8 604.3 L21.5 609.7 L23.8 590.6 L26.0 566.7 L28.2 569.4 L30.9 589.5 L32.9 595.1 L34.9 593.6 L38.1 578.8 L41.6 625.8 L43.6 615.6 L45.6 601.6 L47.8 615.7 L50.1 619.3 L52.3 633.8 L54.1 624.8 L55.9 619.9 L57.7 608.8 L59.5 602.1 L61.3 587.1 L63.1 581.5 L65.8 587.3 L68.4 593.6 L70.5 609.0 L72.5 628.5 L75.2 632.9 L77.8 636.5 L79.6 645.2 L81.4 648.7 L83.2 660.7 L85.9 631.1 L87.8 638.0 L89.7 647.6 L91.5 661.9 L93.4 669.8 L95.3 676.8 L97.5 666.9 L99.8 664.8 L102.0 655.3 L104.7 631.1 L106.7 636.3 L108.7 647.2 L110.9 634.7 L113.2 617.4 L115.4 607.0 L117.4 596.3 L119.4 593.6 L121.5 611.3 L123.5 623.1 L125.7 608.2 L128.0 595.8 L130.2 585.5 L132.2 594.8 L134.2 596.3 L136.2 593.2 L138.2 584.2 L140.0 597.3 L141.8 617.4 L143.6 628.5 L145.6 618.1 L147.6 607.0 L149.6 623.2 L151.6 636.5 L153.5 628.2 L155.4 628.2 L157.2 620.3 L159.1 616.6 L161.0 607.0 L162.9 604.8 L164.8 594.6 L166.6 589.8 L168.5 585.5 L170.7 594.2 L172.8 605.5 L174.9 616.2 L177.1 631.1 L179.1 641.6 L181.2 655.3 L183.4 659.7 L185.7 658.5 L187.9 666.0 L190.6 692.9 L193.2 717.0 L195.2 692.9 L197.3 671.4 L199.5 664.5 L201.8 663.2 L204.0 655.3 L206.7 679.4 L208.7 661.8 L210.7 644.5 L212.7 655.1 L214.7 668.7 L216.6 654.6 L218.5 642.4 L220.3 623.3 L222.2 616.7 L224.1 598.9 L226.1 596.4 L228.1 601.6 L229.9 612.6 L231.7 622.3 L233.5 628.5 L235.7 617.5 L238.0 616.5 L240.2 607.0 L242.4 618.4 L244.7 632.6 L246.9 644.5 L249.1 625.4 L251.4 610.5 L253.6 598.9 L255.7 599.9 L257.9 609.7 L260.0 609.7 L262.2 594.7 L264.5 586.7 L266.7 572.1 L268.7 578.2 L270.7 577.5 L272.9 553.3 L274.8 583.7 L276.6 607.0 L278.7 593.7 L280.7 581.7 L282.8 570.8 L285.0 582.2 L287.3 595.3 L289.5 604.3 L292.2 589.1 L294.9 580.1 L297.6 590.9 L300.3 570.8 L302.5 570.1 L304.8 567.8 L307.0 562.7 L309.6 564.9 L312.3 561.4 L314.5 559.5 L316.8 568.5 L319.0 566.7 L320.4 582.8 L322.2 563.0 L324.0 548.5 L325.8 533.2 L328.0 531.9 L330.3 532.1 L332.5 526.5 L335.1 545.3 L337.8 561.4 L339.8 551.0 L341.9 546.6 L343.9 534.5 L345.9 525.1 L347.7 549.1 L349.5 574.6 L351.3 601.6 L353.3 604.4 L355.3 612.4 L357.3 618.4 L359.3 631.1 L361.3 619.6 L363.4 615.2 L365.4 609.0 L367.4 596.3 L370.0 588.9 L372.7 586.9 L374.9 605.7 L377.2 635.5 L379.4 654.0 L381.2 644.0 L383.0 632.6 L384.8 623.1 L387.0 613.4 L389.3 608.7 L391.5 600.3 L394.2 617.0 L396.9 628.5 L398.9 642.9 L400.9 658.0 L402.9 664.7 L404.9 672.7 L406.9 655.7 L409.0 645.9 L411.2 650.6 L413.5 644.8 L415.7 649.9 L417.7 642.5 L419.7 637.9 L421.7 624.8 L423.7 620.4 L425.7 619.6 L427.7 615.0 L430.4 639.2 L432.4 609.2 L434.5 572.1 L436.5 568.8 L438.5 565.7 L440.5 555.9 L442.5 554.7 L445.2 585.5 L447.2 578.3 L449.2 572.1 L451.2 582.7 L453.2 598.9 L455.5 597.2 L457.7 588.3 L460.0 585.5 L462.2 595.9 L464.5 611.0 L466.7 617.7 L469.4 616.5 L472.0 609.7 L474.0 627.6 L476.0 637.8 L478.3 630.7 L480.5 624.3 L482.8 617.7 L485.5 596.7 L488.1 572.1 L490.8 612.4 L492.8 617.6 L494.8 623.1 L497.5 608.7 L500.2 597.6 L502.0 597.3 L503.8 595.6 L505.6 598.9 L507.6 610.3 L509.6 627.7 L511.6 639.9 L513.6 648.6 L516.3 635.5 L519.0 620.4 L521.1 614.6 L523.3 607.5 L525.4 603.0 L527.6 612.2 L529.9 626.2 L532.1 640.5 L534.8 633.4 L537.4 621.7 L539.7 632.3 L541.9 635.9 L544.2 644.6 L546.2 658.3 L548.2 669.6 L550.2 680.4 L552.2 690.2 L554.2 669.4 L556.2 645.9 L558.2 654.7 L560.2 658.2 L562.3 667.6 L564.3 672.7 L566.5 661.6 L568.8 653.9 L571.0 644.6 L573.2 664.2 L575.5 681.0 L577.7 696.9 L579.7 675.1 L581.7 656.6 L583.9 657.8 L586.0 653.0 L588.2 650.0 L590.3 643.1 L592.5 644.6 L594.7 657.9 L597.0 668.5 L599.2 683.5 L601.2 675.8 L603.2 665.1 L605.2 658.8 L607.2 647.2 L609.2 639.0 L611.3 628.5 L614.0 645.6 L616.6 658.0 L618.8 629.9 L621.1 605.5 L623.3 577.5 L626.0 569.4 L628.0 613.0 L630.0 652.7 L632.2 665.6 L634.5 672.0 L636.7 683.5 L639.4 651.3 L641.3 651.9 L643.2 649.9 L645.0 646.3 L646.9 646.5 L648.8 640.5 L650.6 648.4 L652.4 649.1 L654.2 653.5 L656.0 654.8 L657.8 664.4 L659.6 666.0 L661.8 659.7 L664.1 646.2 L666.3 636.5 L669.0 657.5 L671.6 675.4 L673.6 676.5 L675.7 675.9 L677.7 670.7 L679.7 672.7 L681.7 650.1 L683.7 623.1 L686.4 617.7 L689.1 611.0 L691.1 615.7 L693.1 617.7 L695.8 596.3 L698.5 576.1 L700.7 571.7 L703.0 567.6 L705.2 560.0 L707.9 561.8 L710.5 561.4 L713.2 575.9 L715.9 586.9 L717.9 578.7 L720.0 575.4 L722.0 573.3 L724.0 569.4 L726.6 584.1 L729.3 596.3 L731.8 573.3 L734.2 554.7 L736.2 578.5 L738.1 600.4 L740.1 621.7 L742.1 608.0 L744.1 601.6 L746.1 612.1 L748.2 620.9 L750.2 630.3 L752.2 644.6 L754.2 622.9 L756.2 607.0 L758.4 608.2 L760.7 609.8 L762.9 615.0 L765.0 620.9 L767.2 627.9 L769.3 639.7 L771.5 647.3 L773.6 656.6 L775.8 656.2 L777.9 654.6 L780.1 650.5 L782.2 654.5 L784.4 649.9 L786.9 617.8 L789.4 593.6 L791.4 588.8 L793.4 585.5 L795.4 589.8 L797.4 597.6 L800.1 584.8 L802.8 573.4 L804.6 576.2 L806.4 587.7 L808.2 590.9 L810.9 601.6 L813.1 590.3 L815.4 577.4 L817.6 570.8 L820.2 592.5 L822.9 612.4 L825.0 610.5 L827.0 615.0 L829.6 635.5 L832.3 655.3 L834.1 650.0 L835.9 647.9 L837.7 643.2 L839.9 665.7 L842.2 683.3 L844.4 699.6 L846.6 687.8 L848.9 679.7 L851.1 666.0 L853.1 669.8 L855.1 671.4 L857.8 652.3 L860.5 635.2 L862.5 645.7 L864.5 662.0 L867.0 638.0 L869.4 612.4 L871.4 628.5 L873.3 647.3 L875.3 659.3 L878.0 650.3 L880.6 633.8 L883.3 637.4 L886.0 639.2 L888.7 639.4 L891.4 641.9 L894.0 637.0 L896.7 625.8 L899.0 647.7 L901.2 674.5 L903.5 703.6 L906.1 698.8 L908.8 692.9 L910.6 688.5 L912.4 679.3 L914.2 676.8 L916.9 660.4 L919.6 641.9 L921.6 638.3 L923.6 627.5 L925.6 621.2 L927.6 615.0 L929.6 611.5 L931.7 610.7 L933.7 614.8 L935.7 609.7 L937.7 602.7 L939.7 601.3 L941.7 594.9 L943.7 585.5 L946.4 583.6 L949.0 580.1 L950.8 587.1 L952.7 601.9 L954.5 607.0 L956.5 615.0 L958.5 622.4 L960.5 629.7 L962.5 639.2 L965.2 631.0 L967.9 615.0 L970.0 620.3 L972.2 624.1 L974.3 631.0 L976.5 633.5 L978.6 641.9 L980.6 624.1 L982.6 604.3 L985.3 625.3 L988.0 647.2 L990.2 626.8 L992.5 611.9 L994.7 590.9 L996.7 594.2 L998.8 588.4 L1000.8 593.2 L1002.8 593.6 L1004.8 584.6 L1006.7 582.7 L1008.7 572.1 L1011.1 590.5 L1013.5 604.3 L1015.7 613.9 L1018.0 625.7 L1020.2 639.2 L1022.9 605.6 L1025.6 577.5 L1027.6 582.1 L1029.6 578.8 L1031.8 591.9 L1034.1 609.2 L1036.3 623.1 L1038.5 624.7 L1040.8 627.9 L1043.0 628.5 L1045.1 642.7 L1047.3 657.2 L1049.4 668.7 L1051.4 656.6 L1053.4 652.7 L1055.4 640.0 L1057.4 632.5 L1059.4 641.1 L1061.5 647.9 L1063.5 656.0 L1065.5 666.0 L1068.2 695.6 L1070.8 679.7 L1073.5 663.3 L1075.8 658.5 L1078.0 653.3 L1080.3 649.9 L1082.3 652.6 L1084.3 651.3 L1086.3 613.1 L1088.3 573.4 L1091.0 612.4 L1093.2 614.9 L1095.5 622.9 L1097.7 631.1 L1099.7 656.2 L1101.7 682.1 L1103.8 687.5 L1105.8 686.2 L1108.4 675.2 L1111.1 658.0 L1112.9 660.1 L1114.7 657.6 L1116.5 663.3 L1118.5 685.7 L1120.5 703.6 L1122.7 685.1 L1125.0 668.4 L1127.2 649.9 L1129.9 667.0 L1132.6 680.8 L1134.6 679.9 L1136.6 676.8 L1138.4 682.0 L1140.2 690.8 L1142.0 692.9 L1144.0 680.6 L1146.0 669.2 L1148.0 661.4 L1150.0 647.2 L1152.2 628.2 L1154.5 612.5 L1156.7 597.6 L1158.7 600.9 L1160.8 595.5 L1162.8 602.3 L1164.8 600.3 L1167.0 596.9 L1169.3 589.9 L1171.5 585.5 L1173.5 562.3 L1175.5 542.6 L1177.5 539.4 L1179.6 531.8 L1182.2 574.8 L1184.1 568.4 L1186.0 552.5 L1187.9 545.5 L1189.8 535.9 L1192.0 559.1 L1194.3 581.5 L1196.3 568.7 L1198.3 556.0 L1200.1 566.3 L1201.9 576.5 L1203.7 590.9 L1206.4 599.6 L1209.1 607.0 L1211.8 585.5 L1213.8 613.5 L1215.8 636.5 L1218.0 626.8 L1220.3 621.8 L1222.5 617.7 L1225.2 584.2 L1227.2 585.1 L1229.2 583.2 L1231.2 580.5 L1233.2 577.5 L1235.9 573.0 L1238.6 576.1 L1240.4 590.0 L1242.2 604.1 L1244.0 612.4 L1246.7 617.7 L1249.3 615.0 L1251.1 621.1 L1252.9 620.4 L1254.7 628.5 L1256.9 616.0 L1259.2 595.8 L1261.4 582.8 L1264.1 592.0 L1266.8 598.9 L1268.8 591.8 L1270.8 577.5 L1273.0 574.7 L1275.3 565.6 L1277.5 564.1 L1279.5 566.4 L1281.5 572.1 L1283.8 571.9 L1286.0 562.2 L1288.3 561.4 L1290.9 558.2 L1293.6 553.3 L1295.4 567.8 L1297.2 581.0 L1299.0 598.9 L1300.8 618.7 L1302.7 636.5 L1305.4 627.1 L1308.1 629.5 L1310.7 639.2 L1313.4 612.4 L1316.1 606.6 L1318.8 607.0 L1320.6 607.8 L1322.4 607.2 L1324.2 612.4 L1326.2 623.6 L1328.2 641.9 L1330.9 688.8 L1332.9 680.7 L1334.9 671.4 L1336.9 662.6 L1338.9 649.9 L1340.9 661.0 L1342.9 666.0 L1345.0 652.4 L1347.0 644.6 L1349.7 650.8 L1352.3 658.0 L1354.3 663.9 L1356.4 672.7 L1359.0 644.6 L1360.8 650.8 L1362.6 655.2 L1364.4 660.7 L1366.4 670.9 L1368.4 674.1 L1370.5 656.3 L1372.5 640.5 L1375.2 630.9 L1377.8 628.5 L1379.6 616.2 L1381.4 598.0 L1383.2 586.9 L1385.9 577.9 L1388.6 566.7 L1390.6 566.7 L1392.6 566.7 L1395.3 617.7 L1397.5 630.0 L1399.8 636.1 L1402.0 644.6 L1403.8 637.5 L1405.6 626.6 L1407.4 620.4 L1410.1 623.5 L1412.7 625.8 L1415.4 639.2 L1417.6 628.7 L1419.9 624.2 L1422.1 613.7 L1424.3 635.7 L1426.6 654.6 L1428.8 679.4 L1430.6 662.1 L1432.4 648.0 L1434.2 633.8 L1436.2 627.6 L1438.2 617.7 L1440.9 631.2 L1443.6 649.9 L1445.6 638.2 L1447.6 623.1 L1449.6 645.8 L1451.6 666.0 L1453.4 649.7 L1455.2 641.4 L1457.0 627.1 L1458.8 627.0 L1460.6 630.4 L1462.4 636.5 L1464.6 655.2 L1466.9 670.2 L1469.1 690.2 L1471.1 698.2 L1473.1 700.1 L1475.1 703.9 L1477.1 710.3 L1478.9 699.7 L1480.7 680.6 L1482.5 671.4 L1485.2 636.5 L1487.2 631.6 L1489.2 623.1 L1491.9 633.8 L1494.1 628.5 L1496.4 627.5 L1498.6 628.5 L1500.6 621.4 L1502.6 607.0 L1504.0 576.1 L1506.7 577.5 L1507 682.5Z" fill="url(#gun)" clip-path="url(#cun)"/>
<path d="M12.1 625.8 L13.4 645.9 L15.2 633.0 L17.0 620.1 L18.8 604.3 L21.5 609.7 L23.8 590.6 L26.0 566.7 L28.2 569.4 L30.9 589.5 L32.9 595.1 L34.9 593.6 L38.1 578.8 L41.6 625.8 L43.6 615.6 L45.6 601.6 L47.8 615.7 L50.1 619.3 L52.3 633.8 L54.1 624.8 L55.9 619.9 L57.7 608.8 L59.5 602.1 L61.3 587.1 L63.1 581.5 L65.8 587.3 L68.4 593.6 L70.5 609.0 L72.5 628.5 L75.2 632.9 L77.8 636.5 L79.6 645.2 L81.4 648.7 L83.2 660.7 L85.9 631.1 L87.8 638.0 L89.7 647.6 L91.5 661.9 L93.4 669.8 L95.3 676.8 L97.5 666.9 L99.8 664.8 L102.0 655.3 L104.7 631.1 L106.7 636.3 L108.7 647.2 L110.9 634.7 L113.2 617.4 L115.4 607.0 L117.4 596.3 L119.4 593.6 L121.5 611.3 L123.5 623.1 L125.7 608.2 L128.0 595.8 L130.2 585.5 L132.2 594.8 L134.2 596.3 L136.2 593.2 L138.2 584.2 L140.0 597.3 L141.8 617.4 L143.6 628.5 L145.6 618.1 L147.6 607.0 L149.6 623.2 L151.6 636.5 L153.5 628.2 L155.4 628.2 L157.2 620.3 L159.1 616.6 L161.0 607.0 L162.9 604.8 L164.8 594.6 L166.6 589.8 L168.5 585.5 L170.7 594.2 L172.8 605.5 L174.9 616.2 L177.1 631.1 L179.1 641.6 L181.2 655.3 L183.4 659.7 L185.7 658.5 L187.9 666.0 L190.6 692.9 L193.2 717.0 L195.2 692.9 L197.3 671.4 L199.5 664.5 L201.8 663.2 L204.0 655.3 L206.7 679.4 L208.7 661.8 L210.7 644.5 L212.7 655.1 L214.7 668.7 L216.6 654.6 L218.5 642.4 L220.3 623.3 L222.2 616.7 L224.1 598.9 L226.1 596.4 L228.1 601.6 L229.9 612.6 L231.7 622.3 L233.5 628.5 L235.7 617.5 L238.0 616.5 L240.2 607.0 L242.4 618.4 L244.7 632.6 L246.9 644.5 L249.1 625.4 L251.4 610.5 L253.6 598.9 L255.7 599.9 L257.9 609.7 L260.0 609.7 L262.2 594.7 L264.5 586.7 L266.7 572.1 L268.7 578.2 L270.7 577.5 L272.9 553.3 L274.8 583.7 L276.6 607.0 L278.7 593.7 L280.7 581.7 L282.8 570.8 L285.0 582.2 L287.3 595.3 L289.5 604.3 L292.2 589.1 L294.9 580.1 L297.6 590.9 L300.3 570.8 L302.5 570.1 L304.8 567.8 L307.0 562.7 L309.6 564.9 L312.3 561.4 L314.5 559.5 L316.8 568.5 L319.0 566.7 L320.4 582.8 L322.2 563.0 L324.0 548.5 L325.8 533.2 L328.0 531.9 L330.3 532.1 L332.5 526.5 L335.1 545.3 L337.8 561.4 L339.8 551.0 L341.9 546.6 L343.9 534.5 L345.9 525.1 L347.7 549.1 L349.5 574.6 L351.3 601.6 L353.3 604.4 L355.3 612.4 L357.3 618.4 L359.3 631.1 L361.3 619.6 L363.4 615.2 L365.4 609.0 L367.4 596.3 L370.0 588.9 L372.7 586.9 L374.9 605.7 L377.2 635.5 L379.4 654.0 L381.2 644.0 L383.0 632.6 L384.8 623.1 L387.0 613.4 L389.3 608.7 L391.5 600.3 L394.2 617.0 L396.9 628.5 L398.9 642.9 L400.9 658.0 L402.9 664.7 L404.9 672.7 L406.9 655.7 L409.0 645.9 L411.2 650.6 L413.5 644.8 L415.7 649.9 L417.7 642.5 L419.7 637.9 L421.7 624.8 L423.7 620.4 L425.7 619.6 L427.7 615.0 L430.4 639.2 L432.4 609.2 L434.5 572.1 L436.5 568.8 L438.5 565.7 L440.5 555.9 L442.5 554.7 L445.2 585.5 L447.2 578.3 L449.2 572.1 L451.2 582.7 L453.2 598.9 L455.5 597.2 L457.7 588.3 L460.0 585.5 L462.2 595.9 L464.5 611.0 L466.7 617.7 L469.4 616.5 L472.0 609.7 L474.0 627.6 L476.0 637.8 L478.3 630.7 L480.5 624.3 L482.8 617.7 L485.5 596.7 L488.1 572.1 L490.8 612.4 L492.8 617.6 L494.8 623.1 L497.5 608.7 L500.2 597.6 L502.0 597.3 L503.8 595.6 L505.6 598.9 L507.6 610.3 L509.6 627.7 L511.6 639.9 L513.6 648.6 L516.3 635.5 L519.0 620.4 L521.1 614.6 L523.3 607.5 L525.4 603.0 L527.6 612.2 L529.9 626.2 L532.1 640.5 L534.8 633.4 L537.4 621.7 L539.7 632.3 L541.9 635.9 L544.2 644.6 L546.2 658.3 L548.2 669.6 L550.2 680.4 L552.2 690.2 L554.2 669.4 L556.2 645.9 L558.2 654.7 L560.2 658.2 L562.3 667.6 L564.3 672.7 L566.5 661.6 L568.8 653.9 L571.0 644.6 L573.2 664.2 L575.5 681.0 L577.7 696.9 L579.7 675.1 L581.7 656.6 L583.9 657.8 L586.0 653.0 L588.2 650.0 L590.3 643.1 L592.5 644.6 L594.7 657.9 L597.0 668.5 L599.2 683.5 L601.2 675.8 L603.2 665.1 L605.2 658.8 L607.2 647.2 L609.2 639.0 L611.3 628.5 L614.0 645.6 L616.6 658.0 L618.8 629.9 L621.1 605.5 L623.3 577.5 L626.0 569.4 L628.0 613.0 L630.0 652.7 L632.2 665.6 L634.5 672.0 L636.7 683.5 L639.4 651.3 L641.3 651.9 L643.2 649.9 L645.0 646.3 L646.9 646.5 L648.8 640.5 L650.6 648.4 L652.4 649.1 L654.2 653.5 L656.0 654.8 L657.8 664.4 L659.6 666.0 L661.8 659.7 L664.1 646.2 L666.3 636.5 L669.0 657.5 L671.6 675.4 L673.6 676.5 L675.7 675.9 L677.7 670.7 L679.7 672.7 L681.7 650.1 L683.7 623.1 L686.4 617.7 L689.1 611.0 L691.1 615.7 L693.1 617.7 L695.8 596.3 L698.5 576.1 L700.7 571.7 L703.0 567.6 L705.2 560.0 L707.9 561.8 L710.5 561.4 L713.2 575.9 L715.9 586.9 L717.9 578.7 L720.0 575.4 L722.0 573.3 L724.0 569.4 L726.6 584.1 L729.3 596.3 L731.8 573.3 L734.2 554.7 L736.2 578.5 L738.1 600.4 L740.1 621.7 L742.1 608.0 L744.1 601.6 L746.1 612.1 L748.2 620.9 L750.2 630.3 L752.2 644.6 L754.2 622.9 L756.2 607.0 L758.4 608.2 L760.7 609.8 L762.9 615.0 L765.0 620.9 L767.2 627.9 L769.3 639.7 L771.5 647.3 L773.6 656.6 L775.8 656.2 L777.9 654.6 L780.1 650.5 L782.2 654.5 L784.4 649.9 L786.9 617.8 L789.4 593.6 L791.4 588.8 L793.4 585.5 L795.4 589.8 L797.4 597.6 L800.1 584.8 L802.8 573.4 L804.6 576.2 L806.4 587.7 L808.2 590.9 L810.9 601.6 L813.1 590.3 L815.4 577.4 L817.6 570.8 L820.2 592.5 L822.9 612.4 L825.0 610.5 L827.0 615.0 L829.6 635.5 L832.3 655.3 L834.1 650.0 L835.9 647.9 L837.7 643.2 L839.9 665.7 L842.2 683.3 L844.4 699.6 L846.6 687.8 L848.9 679.7 L851.1 666.0 L853.1 669.8 L855.1 671.4 L857.8 652.3 L860.5 635.2 L862.5 645.7 L864.5 662.0 L867.0 638.0 L869.4 612.4 L871.4 628.5 L873.3 647.3 L875.3 659.3 L878.0 650.3 L880.6 633.8 L883.3 637.4 L886.0 639.2 L888.7 639.4 L891.4 641.9 L894.0 637.0 L896.7 625.8 L899.0 647.7 L901.2 674.5 L903.5 703.6 L906.1 698.8 L908.8 692.9 L910.6 688.5 L912.4 679.3 L914.2 676.8 L916.9 660.4 L919.6 641.9 L921.6 638.3 L923.6 627.5 L925.6 621.2 L927.6 615.0 L929.6 611.5 L931.7 610.7 L933.7 614.8 L935.7 609.7 L937.7 602.7 L939.7 601.3 L941.7 594.9 L943.7 585.5 L946.4 583.6 L949.0 580.1 L950.8 587.1 L952.7 601.9 L954.5 607.0 L956.5 615.0 L958.5 622.4 L960.5 629.7 L962.5 639.2 L965.2 631.0 L967.9 615.0 L970.0 620.3 L972.2 624.1 L974.3 631.0 L976.5 633.5 L978.6 641.9 L980.6 624.1 L982.6 604.3 L985.3 625.3 L988.0 647.2 L990.2 626.8 L992.5 611.9 L994.7 590.9 L996.7 594.2 L998.8 588.4 L1000.8 593.2 L1002.8 593.6 L1004.8 584.6 L1006.7 582.7 L1008.7 572.1 L1011.1 590.5 L1013.5 604.3 L1015.7 613.9 L1018.0 625.7 L1020.2 639.2 L1022.9 605.6 L1025.6 577.5 L1027.6 582.1 L1029.6 578.8 L1031.8 591.9 L1034.1 609.2 L1036.3 623.1 L1038.5 624.7 L1040.8 627.9 L1043.0 628.5 L1045.1 642.7 L1047.3 657.2 L1049.4 668.7 L1051.4 656.6 L1053.4 652.7 L1055.4 640.0 L1057.4 632.5 L1059.4 641.1 L1061.5 647.9 L1063.5 656.0 L1065.5 666.0 L1068.2 695.6 L1070.8 679.7 L1073.5 663.3 L1075.8 658.5 L1078.0 653.3 L1080.3 649.9 L1082.3 652.6 L1084.3 651.3 L1086.3 613.1 L1088.3 573.4 L1091.0 612.4 L1093.2 614.9 L1095.5 622.9 L1097.7 631.1 L1099.7 656.2 L1101.7 682.1 L1103.8 687.5 L1105.8 686.2 L1108.4 675.2 L1111.1 658.0 L1112.9 660.1 L1114.7 657.6 L1116.5 663.3 L1118.5 685.7 L1120.5 703.6 L1122.7 685.1 L1125.0 668.4 L1127.2 649.9 L1129.9 667.0 L1132.6 680.8 L1134.6 679.9 L1136.6 676.8 L1138.4 682.0 L1140.2 690.8 L1142.0 692.9 L1144.0 680.6 L1146.0 669.2 L1148.0 661.4 L1150.0 647.2 L1152.2 628.2 L1154.5 612.5 L1156.7 597.6 L1158.7 600.9 L1160.8 595.5 L1162.8 602.3 L1164.8 600.3 L1167.0 596.9 L1169.3 589.9 L1171.5 585.5 L1173.5 562.3 L1175.5 542.6 L1177.5 539.4 L1179.6 531.8 L1182.2 574.8 L1184.1 568.4 L1186.0 552.5 L1187.9 545.5 L1189.8 535.9 L1192.0 559.1 L1194.3 581.5 L1196.3 568.7 L1198.3 556.0 L1200.1 566.3 L1201.9 576.5 L1203.7 590.9 L1206.4 599.6 L1209.1 607.0 L1211.8 585.5 L1213.8 613.5 L1215.8 636.5 L1218.0 626.8 L1220.3 621.8 L1222.5 617.7 L1225.2 584.2 L1227.2 585.1 L1229.2 583.2 L1231.2 580.5 L1233.2 577.5 L1235.9 573.0 L1238.6 576.1 L1240.4 590.0 L1242.2 604.1 L1244.0 612.4 L1246.7 617.7 L1249.3 615.0 L1251.1 621.1 L1252.9 620.4 L1254.7 628.5 L1256.9 616.0 L1259.2 595.8 L1261.4 582.8 L1264.1 592.0 L1266.8 598.9 L1268.8 591.8 L1270.8 577.5 L1273.0 574.7 L1275.3 565.6 L1277.5 564.1 L1279.5 566.4 L1281.5 572.1 L1283.8 571.9 L1286.0 562.2 L1288.3 561.4 L1290.9 558.2 L1293.6 553.3 L1295.4 567.8 L1297.2 581.0 L1299.0 598.9 L1300.8 618.7 L1302.7 636.5 L1305.4 627.1 L1308.1 629.5 L1310.7 639.2 L1313.4 612.4 L1316.1 606.6 L1318.8 607.0 L1320.6 607.8 L1322.4 607.2 L1324.2 612.4 L1326.2 623.6 L1328.2 641.9 L1330.9 688.8 L1332.9 680.7 L1334.9 671.4 L1336.9 662.6 L1338.9 649.9 L1340.9 661.0 L1342.9 666.0 L1345.0 652.4 L1347.0 644.6 L1349.7 650.8 L1352.3 658.0 L1354.3 663.9 L1356.4 672.7 L1359.0 644.6 L1360.8 650.8 L1362.6 655.2 L1364.4 660.7 L1366.4 670.9 L1368.4 674.1 L1370.5 656.3 L1372.5 640.5 L1375.2 630.9 L1377.8 628.5 L1379.6 616.2 L1381.4 598.0 L1383.2 586.9 L1385.9 577.9 L1388.6 566.7 L1390.6 566.7 L1392.6 566.7 L1395.3 617.7 L1397.5 630.0 L1399.8 636.1 L1402.0 644.6 L1403.8 637.5 L1405.6 626.6 L1407.4 620.4 L1410.1 623.5 L1412.7 625.8 L1415.4 639.2 L1417.6 628.7 L1419.9 624.2 L1422.1 613.7 L1424.3 635.7 L1426.6 654.6 L1428.8 679.4 L1430.6 662.1 L1432.4 648.0 L1434.2 633.8 L1436.2 627.6 L1438.2 617.7 L1440.9 631.2 L1443.6 649.9 L1445.6 638.2 L1447.6 623.1 L1449.6 645.8 L1451.6 666.0 L1453.4 649.7 L1455.2 641.4 L1457.0 627.1 L1458.8 627.0 L1460.6 630.4 L1462.4 636.5 L1464.6 655.2 L1466.9 670.2 L1469.1 690.2 L1471.1 698.2 L1473.1 700.1 L1475.1 703.9 L1477.1 710.3 L1478.9 699.7 L1480.7 680.6 L1482.5 671.4 L1485.2 636.5 L1487.2 631.6 L1489.2 623.1 L1491.9 633.8 L1494.1 628.5 L1496.4 627.5 L1498.6 628.5 L1500.6 621.4 L1502.6 607.0 L1504.0 576.1 L1506.7 577.5" stroke="#7e57c2" stroke-width="1.1" fill="none" stroke-linejoin="round"/>
<path d="M12.1 648.9 L13.6 649.0 L15.1 648.6 L16.6 647.1 L18.1 644.1 L19.6 640.3 L21.1 636.2 L22.6 632.0 L24.1 627.9 L25.6 623.9 L27.1 620.2 L28.6 616.9 L30.1 613.9 L31.6 610.9 L33.1 607.9 L34.6 604.9 L36.1 601.9 L37.6 599.1 L39.1 596.6 L40.6 594.9 L42.1 594.2 L43.6 594.2 L45.1 594.5 L46.6 594.9 L48.1 595.9 L49.6 597.6 L51.1 600.0 L52.6 602.5 L54.1 605.1 L55.6 607.7 L57.1 610.1 L58.6 611.8 L60.1 612.4 L61.6 612.1 L63.1 611.3 L64.6 610.5 L66.1 609.7 L67.6 609.2 L69.1 609.0 L70.6 609.4 L72.1 609.9 L73.6 610.6 L75.1 611.3 L76.6 612.1 L78.1 613.2 L79.6 614.7 L81.1 616.5 L82.6 618.4 L84.1 620.2 L85.6 622.1 L87.1 624.1 L88.6 626.4 L90.1 629.1 L91.6 632.1 L93.1 635.3 L94.6 638.4 L96.1 641.6 L97.6 644.7 L99.1 647.8 L100.6 650.6 L102.1 652.4 L103.6 653.1 L105.1 652.9 L106.6 652.4 L108.1 651.7 L109.6 650.6 L111.1 648.8 L112.6 646.3 L114.1 643.5 L115.6 640.7 L117.1 637.9 L118.6 635.1 L120.1 632.2 L121.6 629.5 L123.1 626.8 L124.6 624.4 L126.1 622.1 L127.6 620.0 L129.1 617.9 L130.6 615.7 L132.1 613.6 L133.6 611.5 L135.1 609.4 L136.6 607.3 L138.1 605.4 L139.6 604.1 L141.1 603.6 L142.6 603.8 L144.1 604.1 L145.6 604.5 L147.1 604.8 L148.6 605.3 L150.1 605.9 L151.6 606.9 L153.1 608.2 L154.6 609.5 L156.1 610.8 L157.6 612.2 L159.1 613.5 L160.6 614.9 L162.1 616.1 L163.6 616.8 L165.1 616.9 L166.6 616.6 L168.1 616.1 L169.6 615.5 L171.1 615.0 L172.6 614.6 L174.1 614.7 L175.6 615.6 L177.1 617.2 L178.6 619.0 L180.1 621.0 L181.6 622.9 L183.1 624.9 L184.6 626.8 L186.1 629.0 L187.6 631.8 L189.1 635.5 L190.6 640.0 L192.1 644.8 L193.6 649.7 L195.1 654.6 L196.6 659.2 L198.1 663.2 L199.6 666.3 L201.1 668.4 L202.6 670.0 L204.1 671.6 L205.6 673.0 L207.1 674.4 L208.6 675.3 L210.1 675.4 L211.6 674.7 L213.1 673.6 L214.6 672.3 L216.1 670.7 L217.6 668.5 L219.1 665.5 L220.6 662.0 L222.1 658.2 L223.6 654.5 L225.1 650.8 L226.6 647.0 L228.1 643.3 L229.6 639.7 L231.1 636.3 L232.6 633.2 L234.1 630.3 L235.6 627.5 L237.1 624.7 L238.6 621.9 L240.1 619.5 L241.6 618.0 L243.1 617.8 L244.6 618.4 L246.1 619.3 L247.6 620.2 L249.1 621.1 L250.6 621.8 L252.1 622.2 L253.6 621.9 L255.1 621.1 L256.6 620.1 L258.1 618.9 L259.6 617.3 L261.1 615.1 L262.6 612.4 L264.1 609.5 L265.6 606.5 L267.1 603.5 L268.6 600.5 L270.1 597.5 L271.6 594.7 L273.1 592.1 L274.6 590.2 L276.1 588.6 L277.6 587.2 L279.1 585.9 L280.6 584.7 L282.1 583.5 L283.6 582.7 L285.1 582.5 L286.6 583.0 L288.1 583.7 L289.6 584.5 L291.1 585.4 L292.6 586.2 L294.1 586.9 L295.6 587.4 L297.1 587.4 L298.6 587.0 L300.1 586.5 L301.6 585.8 L303.1 585.1 L304.6 584.4 L306.1 583.7 L307.6 582.9 L309.1 581.8 L310.6 580.4 L312.1 579.0 L313.6 577.5 L315.1 576.0 L316.6 574.5 L318.1 573.0 L319.6 571.5 L321.1 569.9 L322.6 568.1 L324.1 566.3 L325.6 564.3 L327.1 562.4 L328.6 560.4 L330.1 558.5 L331.6 556.6 L333.1 554.7 L334.6 553.2 L336.1 552.1 L337.6 551.4 L339.1 550.8 L340.6 550.0 L342.1 548.9 L343.6 547.5 L345.1 546.4 L346.6 546.0 L348.1 547.1 L349.6 549.5 L351.1 552.6 L352.6 556.1 L354.1 560.1 L355.6 564.7 L357.1 569.7 L358.6 574.8 L360.1 579.9 L361.6 584.8 L363.1 589.2 L364.6 592.7 L366.1 595.6 L367.6 598.3 L369.1 600.8 L370.6 603.3 L372.1 605.6 L373.6 607.4 L375.1 609.0 L376.6 610.3 L378.1 611.6 L379.6 612.8 L381.1 613.9 L382.6 614.6 L384.1 614.9 L385.6 615.0 L387.1 615.0 L388.6 615.0 L390.1 615.3 L391.6 616.1 L393.1 617.6 L394.6 619.7 L396.1 621.9 L397.6 624.2 L399.1 626.4 L400.6 628.7 L402.1 630.8 L403.6 632.9 L405.1 634.9 L406.6 636.8 L408.1 638.8 L409.6 640.8 L411.1 642.7 L412.6 644.7 L414.1 646.6 L415.6 648.5 L417.1 649.9 L418.6 650.5 L420.1 650.1 L421.6 648.9 L423.1 647.6 L424.6 646.1 L426.1 644.7 L427.6 643.0 L429.1 640.8 L430.6 637.7 L432.1 634.1 L433.6 630.2 L435.1 626.3 L436.6 622.4 L438.1 618.5 L439.6 614.6 L441.1 610.8 L442.6 607.3 L444.1 604.1 L445.6 601.1 L447.1 598.2 L448.6 595.4 L450.1 592.5 L451.6 589.7 L453.1 586.8 L454.6 584.1 L456.1 581.9 L457.6 580.8 L459.1 581.0 L460.6 582.2 L462.1 583.6 L463.6 585.2 L465.1 586.7 L466.6 588.2 L468.1 589.9 L469.6 591.8 L471.1 594.0 L472.6 596.5 L474.1 599.0 L475.6 601.5 L477.1 604.1 L478.6 606.6 L480.1 609.1 L481.6 611.2 L483.1 612.7 L484.6 613.5 L486.1 613.7 L487.6 613.7 L489.1 613.7 L490.6 613.7 L492.1 613.7 L493.6 613.7 L495.1 613.5 L496.6 613.1 L498.1 612.4 L499.6 611.6 L501.1 610.6 L502.6 609.7 L504.1 608.8 L505.6 608.3 L507.1 608.4 L508.6 609.4 L510.1 611.0 L511.6 612.9 L513.1 614.8 L514.6 616.6 L516.1 618.4 L517.6 619.9 L519.1 621.0 L520.6 621.9 L522.1 622.5 L523.6 623.1 L525.1 623.8 L526.6 624.4 L528.1 625.0 L529.6 625.6 L531.1 626.1 L532.6 626.3 L534.1 626.2 L535.6 625.5 L537.1 624.6 L538.6 623.7 L540.1 623.1 L541.6 623.5 L543.1 625.0 L544.6 627.3 L546.1 630.0 L547.6 632.7 L549.1 635.4 L550.6 638.1 L552.1 640.8 L553.6 643.4 L555.1 645.7 L556.6 647.7 L558.1 649.4 L559.6 651.1 L561.1 652.7 L562.6 654.4 L564.1 656.1 L565.6 657.7 L567.1 659.2 L568.6 660.4 L570.1 661.4 L571.6 662.1 L573.1 662.7 L574.6 663.3 L576.1 663.9 L577.6 664.6 L579.1 665.2 L580.6 665.8 L582.1 666.4 L583.6 666.9 L585.1 667.1 L586.6 667.1 L588.1 667.0 L589.6 666.9 L591.1 666.7 L592.6 666.5 L594.1 666.4 L595.6 666.2 L597.1 666.0 L598.6 665.6 L600.1 665.2 L601.6 664.7 L603.1 664.2 L604.6 663.7 L606.1 663.1 L607.6 662.4 L609.1 661.7 L610.6 661.0 L612.1 660.2 L613.6 659.4 L615.1 658.4 L616.6 656.7 L618.1 654.0 L619.6 650.6 L621.1 647.0 L622.6 643.4 L624.1 639.7 L625.6 636.1 L627.1 632.9 L628.6 630.8 L630.1 630.2 L631.6 630.8 L633.1 631.9 L634.6 633.0 L636.1 634.2 L637.6 635.4 L639.1 636.6 L640.6 638.1 L642.1 640.0 L643.6 642.2 L645.1 644.5 L646.6 646.8 L648.1 649.1 L649.6 651.4 L651.1 653.5 L652.6 655.0 L654.1 655.7 L655.6 655.5 L657.1 655.1 L658.6 654.5 L660.1 654.0 L661.6 653.5 L663.1 652.9 L664.6 652.4 L666.1 652.0 L667.6 652.1 L669.1 652.7 L670.6 653.7 L672.1 654.9 L673.6 656.1 L675.1 657.3 L676.6 658.5 L678.1 659.6 L679.6 660.4 L681.1 660.4 L682.6 659.3 L684.1 657.3 L685.6 655.2 L687.1 652.9 L688.6 650.7 L690.1 648.4 L691.6 646.1 L693.1 643.5 L694.6 640.1 L696.1 635.6 L697.6 630.4 L699.1 624.8 L700.6 619.3 L702.1 613.7 L703.6 608.2 L705.1 602.7 L706.6 597.6 L708.1 593.5 L709.6 590.6 L711.1 588.5 L712.6 586.7 L714.1 585.0 L715.6 583.2 L717.1 581.5 L718.6 579.7 L720.1 578.0 L721.6 576.3 L723.1 575.1 L724.6 574.5 L726.1 574.6 L727.6 575.2 L729.1 576.0 L730.6 576.7 L732.1 577.5 L733.6 578.5 L735.1 579.9 L736.6 581.8 L738.1 583.9 L739.6 586.2 L741.1 588.4 L742.6 590.7 L744.1 592.9 L745.6 595.2 L747.1 597.4 L748.6 599.7 L750.1 601.8 L751.6 603.7 L753.1 605.4 L754.6 607.1 L756.1 608.7 L757.6 610.3 L759.1 612.0 L760.6 613.6 L762.1 615.2 L763.6 616.8 L765.1 618.4 L766.6 620.0 L768.1 621.6 L769.6 623.2 L771.1 624.7 L772.6 626.2 L774.1 627.8 L775.6 629.3 L777.1 630.8 L778.6 632.4 L780.1 634.2 L781.6 636.1 L783.1 638.1 L784.6 640.0 L786.1 641.1 L787.6 641.0 L789.1 639.9 L790.6 638.2 L792.1 636.2 L793.6 634.2 L795.1 631.9 L796.6 629.1 L798.1 625.6 L799.6 621.8 L801.1 617.8 L802.6 613.8 L804.1 609.8 L805.6 605.8 L807.1 601.8 L808.6 597.8 L810.1 594.1 L811.6 590.9 L813.1 588.8 L814.6 587.6 L816.1 586.9 L817.6 586.5 L819.1 586.4 L820.6 586.9 L822.1 588.2 L823.6 590.0 L825.1 592.0 L826.6 594.1 L828.1 596.6 L829.6 599.4 L831.1 602.6 L832.6 606.0 L834.1 609.4 L835.6 612.8 L837.1 616.3 L838.6 620.4 L840.1 625.3 L841.6 630.8 L843.1 636.7 L844.6 642.6 L846.1 648.6 L847.6 654.2 L849.1 659.1 L850.6 662.7 L852.1 664.9 L853.6 666.3 L855.1 667.4 L856.6 668.0 L858.1 668.1 L859.6 667.8 L861.1 667.4 L862.6 666.9 L864.1 666.3 L865.6 665.2 L867.1 663.3 L868.6 660.8 L870.1 658.1 L871.6 655.3 L873.1 652.5 L874.6 649.8 L876.1 647.3 L877.6 645.2 L879.1 643.5 L880.6 642.1 L882.1 641.0 L883.6 640.4 L885.1 640.1 L886.6 639.9 L888.1 639.8 L889.6 639.6 L891.1 639.4 L892.6 639.4 L894.1 639.5 L895.6 639.7 L897.1 639.9 L898.6 640.3 L900.1 641.2 L901.6 643.0 L903.1 645.6 L904.6 648.6 L906.1 651.8 L907.6 655.0 L909.1 658.1 L910.6 660.9 L912.1 663.2 L913.6 664.8 L915.1 666.2 L916.6 667.4 L918.1 668.6 L919.6 669.8 L921.1 671.0 L922.6 671.9 L924.1 671.9 L925.6 670.4 L927.1 667.2 L928.6 663.0 L930.1 658.6 L931.6 654.1 L933.1 649.7 L934.6 645.4 L936.1 641.3 L937.6 637.5 L939.1 634.0 L940.6 630.5 L942.1 627.0 L943.6 623.5 L945.1 619.9 L946.6 616.4 L948.1 613.0 L949.6 609.7 L951.1 607.0 L952.6 605.5 L954.1 605.0 L955.6 605.1 L957.1 605.4 L958.6 605.7 L960.1 606.0 L961.6 606.3 L963.1 606.7 L964.6 607.3 L966.1 608.2 L967.6 609.5 L969.1 610.9 L970.6 612.4 L972.1 613.9 L973.6 615.4 L975.1 616.9 L976.6 618.3 L978.1 619.6 L979.6 620.7 L981.1 621.5 L982.6 622.2 L984.1 622.9 L985.6 623.5 L987.1 624.2 L988.6 624.7 L990.1 624.8 L991.6 624.2 L993.1 623.0 L994.6 621.5 L996.1 619.8 L997.6 618.2 L999.1 616.5 L1000.6 614.8 L1002.1 613.1 L1003.6 611.3 L1005.1 609.4 L1006.6 607.4 L1008.1 605.5 L1009.6 603.5 L1011.1 601.6 L1012.6 599.6 L1014.1 597.9 L1015.6 596.9 L1017.1 596.9 L1018.6 598.0 L1020.1 599.6 L1021.6 601.1 L1023.1 602.0 L1024.6 602.2 L1026.1 601.9 L1027.6 601.4 L1029.1 601.0 L1030.6 601.0 L1032.1 601.4 L1033.6 602.1 L1035.1 603.1 L1036.6 604.1 L1038.1 605.1 L1039.6 606.1 L1041.1 607.0 L1042.6 608.1 L1044.1 609.3 L1045.6 611.3 L1047.1 614.0 L1048.6 617.4 L1050.1 620.9 L1051.6 624.5 L1053.1 628.0 L1054.6 631.5 L1056.1 634.6 L1057.6 637.2 L1059.1 639.5 L1060.6 641.7 L1062.1 643.9 L1063.6 646.0 L1065.1 648.2 L1066.6 650.4 L1068.1 652.5 L1069.6 654.5 L1071.1 656.1 L1072.6 657.1 L1074.1 657.9 L1075.6 658.5 L1077.1 659.1 L1078.6 659.7 L1080.1 660.3 L1081.6 660.8 L1083.1 660.8 L1084.6 659.9 L1086.1 657.9 L1087.6 655.0 L1089.1 651.9 L1090.6 648.8 L1092.1 645.6 L1093.6 642.5 L1095.1 639.3 L1096.6 636.4 L1098.1 634.1 L1099.6 633.2 L1101.1 633.5 L1102.6 634.7 L1104.1 636.2 L1105.6 637.7 L1107.1 639.3 L1108.6 641.0 L1110.1 643.3 L1111.6 646.2 L1113.1 649.4 L1114.6 652.8 L1116.1 656.3 L1117.6 659.7 L1119.1 663.1 L1120.6 666.5 L1122.1 669.7 L1123.6 672.1 L1125.1 673.3 L1126.6 673.0 L1128.1 671.8 L1129.6 670.6 L1131.1 669.9 L1132.6 670.0 L1134.1 670.7 L1135.6 671.6 L1137.1 672.6 L1138.6 673.6 L1140.1 674.6 L1141.6 675.4 L1143.1 675.7 L1144.6 675.3 L1146.1 674.2 L1147.6 673.0 L1149.1 671.6 L1150.6 670.3 L1152.1 668.9 L1153.6 667.2 L1155.1 664.7 L1156.6 660.9 L1158.1 656.1 L1159.6 650.8 L1161.1 645.5 L1162.6 640.0 L1164.1 634.6 L1165.6 629.2 L1167.1 623.9 L1168.6 618.7 L1170.1 613.8 L1171.6 609.0 L1173.1 604.4 L1174.6 599.7 L1176.1 595.0 L1177.6 590.4 L1179.1 585.8 L1180.6 581.3 L1182.1 577.4 L1183.6 574.3 L1185.1 571.7 L1186.6 569.3 L1188.1 567.0 L1189.6 564.7 L1191.1 562.4 L1192.6 560.1 L1194.1 557.9 L1195.6 556.0 L1197.1 555.3 L1198.6 555.9 L1200.1 557.5 L1201.6 559.4 L1203.1 561.4 L1204.6 563.4 L1206.1 565.4 L1207.6 567.6 L1209.1 570.0 L1210.6 572.9 L1212.1 576.2 L1213.6 579.5 L1215.1 582.9 L1216.6 586.3 L1218.1 589.6 L1219.6 593.0 L1221.1 596.4 L1222.6 599.6 L1224.1 602.4 L1225.6 604.4 L1227.1 605.3 L1228.6 605.6 L1230.1 605.6 L1231.6 605.4 L1233.1 604.8 L1234.6 603.7 L1236.1 602.0 L1237.6 600.3 L1239.1 598.4 L1240.6 596.6 L1242.1 594.8 L1243.6 593.3 L1245.1 592.5 L1246.6 592.7 L1248.1 593.7 L1249.6 595.0 L1251.1 596.5 L1252.6 597.9 L1254.1 599.4 L1255.6 600.8 L1257.1 602.3 L1258.6 603.7 L1260.1 604.9 L1261.6 605.7 L1263.1 606.1 L1264.6 606.1 L1266.1 605.9 L1267.6 605.6 L1269.1 604.9 L1270.6 603.5 L1272.1 601.5 L1273.6 599.2 L1275.1 596.9 L1276.6 594.6 L1278.1 592.3 L1279.6 589.9 L1281.1 587.6 L1282.6 585.4 L1284.1 583.4 L1285.6 581.9 L1287.1 580.6 L1288.6 579.4 L1290.1 578.2 L1291.6 577.1 L1293.1 575.9 L1294.6 575.1 L1296.1 575.2 L1297.6 576.6 L1299.1 579.0 L1300.6 581.8 L1302.1 584.8 L1303.6 587.7 L1305.1 590.6 L1306.6 593.6 L1308.1 596.5 L1309.6 599.3 L1311.1 601.8 L1312.6 604.1 L1314.1 606.1 L1315.6 608.1 L1317.1 610.1 L1318.6 612.1 L1320.1 614.2 L1321.6 616.2 L1323.1 618.2 L1324.6 620.2 L1326.1 622.2 L1327.6 624.2 L1329.1 626.3 L1330.6 628.4 L1332.1 630.5 L1333.6 632.6 L1335.1 634.7 L1336.6 636.7 L1338.1 638.9 L1339.6 641.0 L1341.1 643.3 L1342.6 645.6 L1344.1 648.0 L1345.6 650.4 L1347.1 652.8 L1348.6 655.2 L1350.1 657.4 L1351.6 659.0 L1353.1 659.6 L1354.6 659.2 L1356.1 658.2 L1357.6 657.0 L1359.1 656.0 L1360.6 655.3 L1362.1 655.0 L1363.6 655.0 L1365.1 655.0 L1366.6 655.1 L1368.1 655.1 L1369.6 654.7 L1371.1 653.8 L1372.6 652.5 L1374.1 651.0 L1375.6 649.5 L1377.1 648.0 L1378.6 646.3 L1380.1 644.1 L1381.6 641.1 L1383.1 637.4 L1384.6 633.4 L1386.1 629.3 L1387.6 625.2 L1389.1 621.2 L1390.6 617.5 L1392.1 614.4 L1393.6 611.9 L1395.1 609.7 L1396.6 607.9 L1398.1 606.8 L1399.6 606.6 L1401.1 607.0 L1402.6 607.6 L1404.1 608.3 L1405.6 609.1 L1407.1 610.5 L1408.6 612.5 L1410.1 615.2 L1411.6 618.1 L1413.1 621.1 L1414.6 624.1 L1416.1 626.8 L1417.6 629.0 L1419.1 630.1 L1420.6 630.3 L1422.1 630.0 L1423.6 629.7 L1425.1 629.7 L1426.6 630.0 L1428.1 630.9 L1429.6 632.2 L1431.1 633.5 L1432.6 634.8 L1434.1 636.2 L1435.6 637.3 L1437.1 638.2 L1438.6 638.7 L1440.1 638.9 L1441.6 639.0 L1443.1 639.2 L1444.6 639.5 L1446.1 640.1 L1447.6 640.8 L1449.1 641.7 L1450.6 642.5 L1452.1 643.0 L1453.6 643.0 L1455.1 642.5 L1456.6 641.6 L1458.1 640.7 L1459.6 640.1 L1461.1 640.3 L1462.6 641.5 L1464.1 643.5 L1465.6 645.8 L1467.1 648.1 L1468.6 650.4 L1470.1 652.7 L1471.6 655.1 L1473.1 657.7 L1474.6 660.3 L1476.1 663.0 L1477.6 665.7 L1479.1 668.4 L1480.6 671.1 L1482.1 673.8 L1483.6 676.0 L1485.1 677.1 L1486.6 676.6 L1488.1 674.9 L1489.6 672.8 L1491.1 670.5 L1492.6 668.2 L1494.1 665.8 L1495.6 662.7 L1497.1 658.8 L1498.6 654.3 L1500.1 649.4 L1501.6 644.2 L1503.1 638.7 L1504.6 633.2 L1506.1 628.9" stroke="#fdd835" stroke-width="1.1" fill="none" stroke-linejoin="round"/>
</g>

<!-- legends -->
<g font-size="13">
<text x="20" y="52" fill="#d1d4dc" textLength="151" lengthAdjust="spacingAndGlyphs">Aster / USDT · 1h · MEXC</text>
<text x="179.6" y="52" fill="#d1d4dc" textLength="8.4" lengthAdjust="spacingAndGlyphs">O</text><text x="189" y="52" fill="#26a69a" textLength="38.7" lengthAdjust="spacingAndGlyphs">0.9901</text>
<text x="237.4" y="52" fill="#d1d4dc" textLength="7.9" lengthAdjust="spacingAndGlyphs">H</text><text x="245.3" y="52" fill="#26a69a" textLength="39" lengthAdjust="spacingAndGlyphs">0.9901</text>
<text x="294.2" y="52" fill="#d1d4dc" textLength="6" lengthAdjust="spacingAndGlyphs">L</text><text x="300.6" y="52" fill="#26a69a" textLength="39.8" lengthAdjust="spacingAndGlyphs">0.9901</text>
<text x="349.4" y="52" fill="#d1d4dc" textLength="7" lengthAdjust="spacingAndGlyphs">C</text><text x="357" y="52" fill="#26a69a" textLength="39.7" lengthAdjust="spacingAndGlyphs">0.9901</text>
<text x="406.9" y="52" fill="#26a69a" textLength="101" lengthAdjust="spacingAndGlyphs">+0.0001 (+0.01%)</text>
<text x="20" y="70.5" fill="#d1d4dc" textLength="85" lengthAdjust="spacingAndGlyphs">MA (30, close)</text>
<text x="113.5" y="70.5" fill="#2196f3" textLength="40.5" lengthAdjust="spacingAndGlyphs">0.9407</text>
<text x="20" y="524" fill="#d1d4dc" textLength="85.5" lengthAdjust="spacingAndGlyphs">RSI (14, close)</text>
<text x="114.6" y="524" fill="#7e57c2" textLength="32.4" lengthAdjust="spacingAndGlyphs">61.37</text>
<text x="155.1" y="524" fill="#fdd835" font-weight="700" textLength="33.6" lengthAdjust="spacingAndGlyphs">48.76</text>
</g>

<!-- axes -->
<g font-size="13" fill="#c8c8c8">
<text x="1536" y="102.0" font-size="13.5" textLength="41.5" lengthAdjust="spacingAndGlyphs">2.2000</text><text x="1536" y="156.3" font-size="13.5" textLength="41.5" lengthAdjust="spacingAndGlyphs">2.0000</text><text x="1536" y="210.6" font-size="13.5" textLength="41.5" lengthAdjust="spacingAndGlyphs">1.8000</text><text x="1536" y="264.9" font-size="13.5" textLength="41.5" lengthAdjust="spacingAndGlyphs">1.6000</text><text x="1536" y="319.2" font-size="13.5" textLength="41.5" lengthAdjust="spacingAndGlyphs">1.4000</text><text x="1536" y="373.5" font-size="13.5" textLength="41.5" lengthAdjust="spacingAndGlyphs">1.2000</text><text x="1536" y="482.1" font-size="13.5" textLength="41.5" lengthAdjust="spacingAndGlyphs">0.8000</text>
<text x="1536" y="521.0" font-size="13.5" textLength="34" lengthAdjust="spacingAndGlyphs">80.00</text><text x="1536" y="654.0" font-size="13.5" textLength="34" lengthAdjust="spacingAndGlyphs">40.00</text><text x="1536" y="720.4" font-size="13.5" textLength="34" lengthAdjust="spacingAndGlyphs">20.00</text>
<text x="38.5" y="758.7" text-anchor="middle">27</text><text x="123.7" y="758.7" text-anchor="middle">29</text><text x="209.0" y="758.7" text-anchor="middle" font-weight="700">Oct</text><text x="294.2" y="758.7" text-anchor="middle">3</text><text x="379.5" y="758.7" text-anchor="middle">5</text><text x="464.7" y="758.7" text-anchor="middle">7</text><text x="549.9" y="758.7" text-anchor="middle">9</text><text x="635.2" y="758.7" text-anchor="middle">11</text><text x="720.4" y="758.7" text-anchor="middle">13</text><text x="805.7" y="758.7" text-anchor="middle">15</text><text x="890.9" y="758.7" text-anchor="middle">17</text><text x="976.1" y="758.7" text-anchor="middle">19</text><text x="1061.4" y="758.7" text-anchor="middle">21</text><text x="1146.6" y="758.7" text-anchor="middle">23</text><text x="1231.9" y="758.7" text-anchor="middle">25</text><text x="1317.1" y="758.7" text-anchor="middle">27</text><text x="1402.3" y="758.7" text-anchor="middle">29</text><text x="1487.6" y="758.7" text-anchor="middle">31</text>
</g>

<!-- USDT button -->
<rect x="1530.5" y="34.5" width="52" height="28.5" rx="6" fill="#0f0f0f" stroke="#3a3a3a" stroke-width="1"/>
<text x="1541" y="54" font-size="13" font-weight="700" fill="#d8d8d8" textLength="32" lengthAdjust="spacingAndGlyphs">USDT</text>

<!-- tags -->
<rect x="1447" y="416" width="79" height="19" rx="2" fill="#089981"/>
<text x="1486.5" y="430.5" font-size="13" font-weight="700" fill="#ffffff" text-anchor="middle" textLength="69" lengthAdjust="spacingAndGlyphs">ASTERUSDT</text>
<rect x="1527" y="416" width="56" height="19" rx="2" fill="#089981"/>
<text x="1537" y="430.5" font-size="13" font-weight="700" fill="#ffffff" textLength="40" lengthAdjust="spacingAndGlyphs">0.9901</text>
<rect x="1527" y="436" width="56" height="18" rx="2" fill="#2196f3"/>
<text x="1537" y="449.8" font-size="13" font-weight="700" fill="#ffffff" textLength="40" lengthAdjust="spacingAndGlyphs">0.9407</text>
<rect x="1527" y="569" width="50" height="19" rx="2" fill="#7e57c2"/>
<text x="1536.5" y="583" font-size="13" font-weight="700" fill="#ffffff" textLength="34" lengthAdjust="spacingAndGlyphs">61.37</text>
<rect x="1527" y="610" width="50" height="19" rx="2" fill="#fdd835"/>
<text x="1536.5" y="624.5" font-size="13.5" fill="#131313" stroke="#131313" stroke-width="0.2" textLength="34" lengthAdjust="spacingAndGlyphs">48.76</text>

<!-- lightning -->
<circle cx="1507.5" cy="486.3" r="11" fill="none" stroke="#b04fc8" stroke-width="1.6"/>
<path d="M1511 480.2L1503 487.2H1507.4L1504 492.8L1512 485.6H1507.6Z" fill="#b04fc8"/>

<!-- logo -->
<g fill="#dcdcdc">
<path d="M13 794.8H26.8V811.8H19.8V801.8H13Z"/>
<circle cx="32.3" cy="798.4" r="3.4"/>
<path d="M39.1 794.8H46.7L40.2 811.8H32.3Z"/>
</g>
<text x="55" y="812.2" font-size="23.5" font-weight="700" fill="#dcdcdc" textLength="135" lengthAdjust="spacingAndGlyphs">TradingView</text>
</svg>
</body></html>
